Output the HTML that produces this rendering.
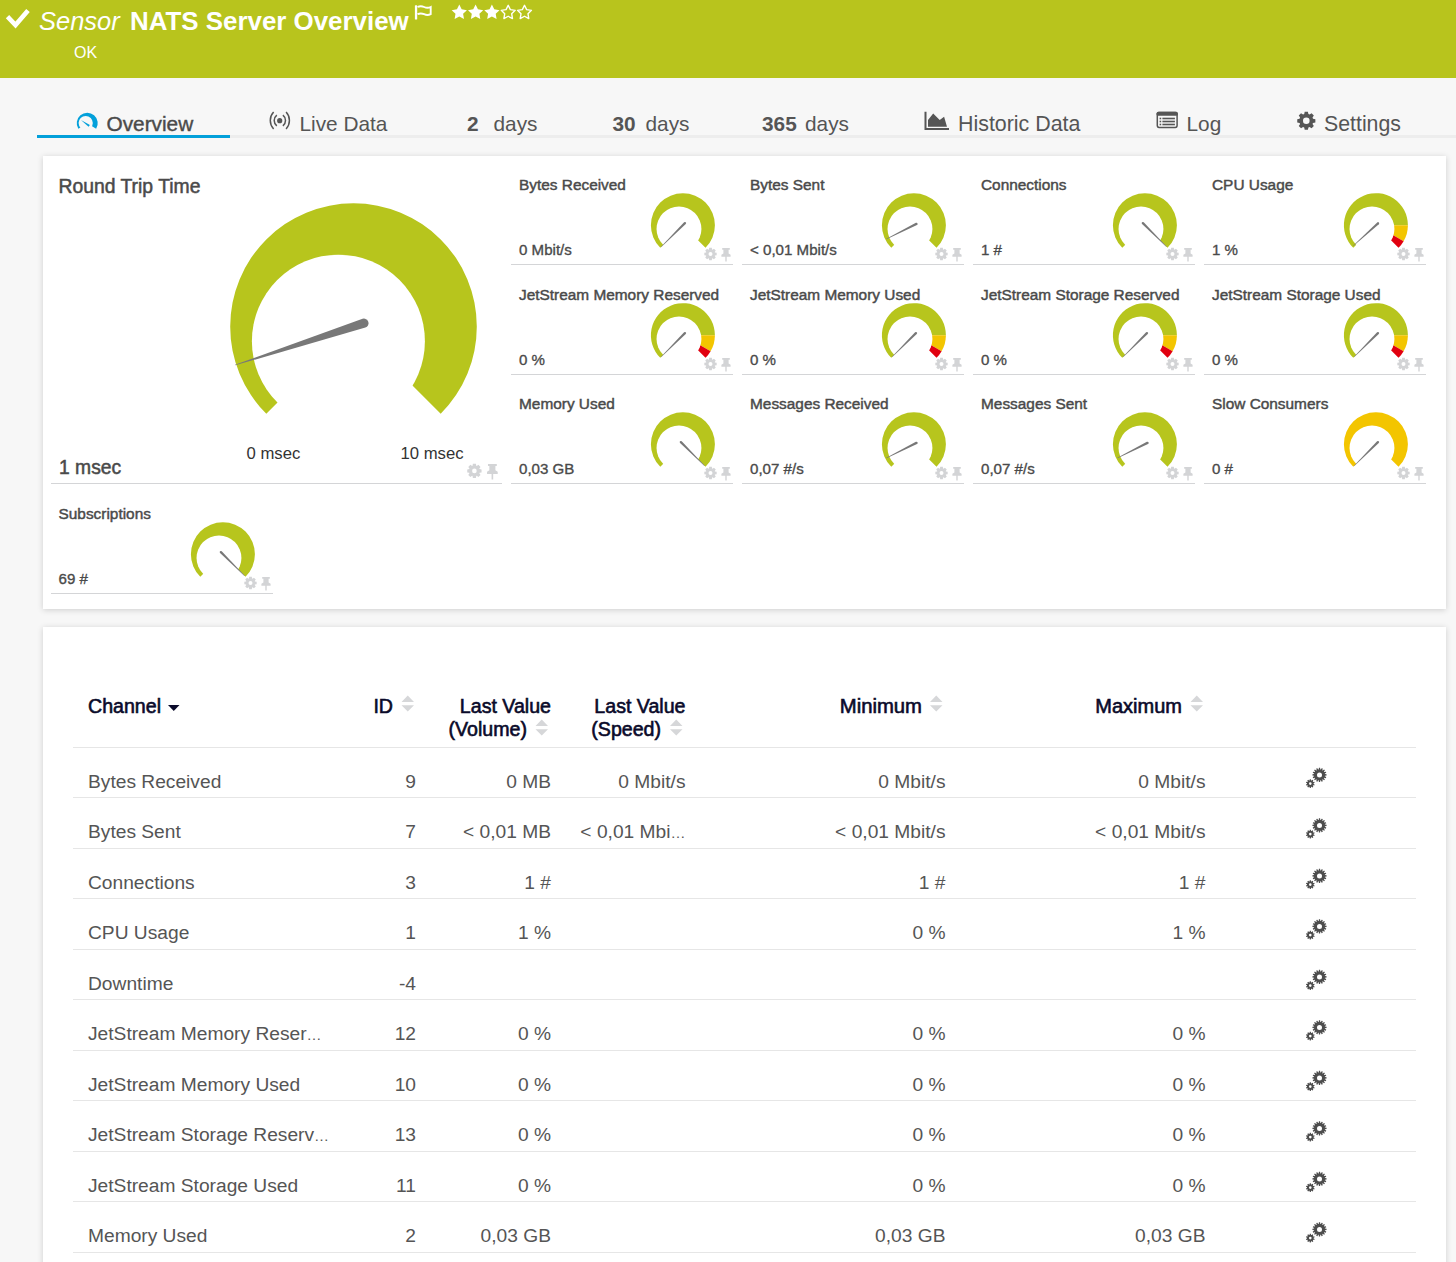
<!DOCTYPE html>
<html><head><meta charset="utf-8"><title>Sensor NATS Server Overview</title>
<style>
html,body{margin:0;padding:0;}
body{width:1456px;height:1262px;overflow:hidden;background:#f7f7f7;font-family:"Liberation Sans",sans-serif;position:relative;}
.t{position:absolute;white-space:nowrap;font-family:"Liberation Sans",sans-serif;}
.hdr{position:absolute;left:0;top:0;width:1456px;height:78px;background:#b8c41d;}
.card{position:absolute;left:43px;width:1403px;background:#fff;box-shadow:0 1px 6px rgba(0,0,0,0.17);}
svg{position:absolute;left:0;top:0;}
</style></head><body>
<div class="hdr"></div><div class="t" style="left:39.00px;top:8.91px;font-size:25.5px;line-height:25.5px;font-weight:400;color:#fff;font-style:italic;">Sensor</div>
<div class="t" style="left:130.00px;top:8.57px;font-size:25.9px;line-height:25.9px;font-weight:700;color:#fff;font-style:normal;">NATS Server Overview</div>
<div class="t" style="left:74.00px;top:45.45px;font-size:16px;line-height:16px;font-weight:400;color:#fff;font-style:normal;">OK</div>
<div style="position:absolute;left:230px;top:135px;width:1226px;height:3px;background:#ededed"></div><div style="position:absolute;left:37px;top:135px;width:193px;height:3px;background:#03a0da"></div><div class="t" style="left:106.50px;top:114.19px;font-size:20.8px;line-height:20.8px;font-weight:400;color:#4a4a4a;font-style:normal;-webkit-text-stroke:0.4px #4a4a4a">Overview</div>
<div class="t" style="left:299.50px;top:114.19px;font-size:20.8px;line-height:20.8px;font-weight:400;color:#555;font-style:normal;">Live Data</div>
<div class="t" style="left:467.00px;top:114.19px;font-size:20.8px;line-height:20.8px;font-weight:700;color:#555;font-style:normal;">2</div>
<div class="t" style="left:493.50px;top:114.19px;font-size:20.8px;line-height:20.8px;font-weight:400;color:#555;font-style:normal;">days</div>
<div class="t" style="left:612.50px;top:114.19px;font-size:20.8px;line-height:20.8px;font-weight:700;color:#555;font-style:normal;">30</div>
<div class="t" style="left:645.50px;top:114.19px;font-size:20.8px;line-height:20.8px;font-weight:400;color:#555;font-style:normal;">days</div>
<div class="t" style="left:762.00px;top:114.19px;font-size:20.8px;line-height:20.8px;font-weight:700;color:#555;font-style:normal;">365</div>
<div class="t" style="left:805.00px;top:114.19px;font-size:20.8px;line-height:20.8px;font-weight:400;color:#555;font-style:normal;">days</div>
<div class="t" style="left:958.00px;top:113.68px;font-size:21.4px;line-height:21.4px;font-weight:400;color:#555;font-style:normal;">Historic Data</div>
<div class="t" style="left:1186.50px;top:114.19px;font-size:20.8px;line-height:20.8px;font-weight:400;color:#555;font-style:normal;">Log</div>
<div class="t" style="left:1324.00px;top:113.77px;font-size:21.3px;line-height:21.3px;font-weight:400;color:#555;font-style:normal;">Settings</div>
<div class="card" style="top:156px;height:453px"></div><div class="card" style="top:627px;height:700px"></div><div class="t" style="left:58.50px;top:177.22px;font-size:19.35px;line-height:19.35px;font-weight:400;color:#4a4a4a;font-style:normal;-webkit-text-stroke:0.5px #4a4a4a">Round Trip Time</div>
<div class="t" style="left:59.00px;top:457.76px;font-size:19.3px;line-height:19.3px;font-weight:400;color:#4a4a4a;font-style:normal;-webkit-text-stroke:0.5px #4a4a4a">1 msec</div>
<div class="t" style="left:246.50px;top:445.56px;font-size:16.7px;line-height:16.7px;font-weight:400;color:#333;font-style:normal;">0 msec</div>
<div class="t" style="left:400.50px;top:445.56px;font-size:16.7px;line-height:16.7px;font-weight:400;color:#333;font-style:normal;">10 msec</div>
<div class="t" style="left:519.00px;top:177.06px;font-size:15.4px;line-height:15.4px;font-weight:400;color:#4a4a4a;font-style:normal;-webkit-text-stroke:0.45px #4a4a4a">Bytes Received</div>
<div class="t" style="left:519.00px;top:242.21px;font-size:15.1px;line-height:15.1px;font-weight:400;color:#4a4a4a;font-style:normal;-webkit-text-stroke:0.35px #4a4a4a">0 Mbit/s</div>
<div class="t" style="left:750.00px;top:177.06px;font-size:15.4px;line-height:15.4px;font-weight:400;color:#4a4a4a;font-style:normal;-webkit-text-stroke:0.45px #4a4a4a">Bytes Sent</div>
<div class="t" style="left:750.00px;top:242.21px;font-size:15.1px;line-height:15.1px;font-weight:400;color:#4a4a4a;font-style:normal;-webkit-text-stroke:0.35px #4a4a4a">&lt; 0,01 Mbit/s</div>
<div class="t" style="left:981.00px;top:177.06px;font-size:15.4px;line-height:15.4px;font-weight:400;color:#4a4a4a;font-style:normal;-webkit-text-stroke:0.45px #4a4a4a">Connections</div>
<div class="t" style="left:981.00px;top:242.21px;font-size:15.1px;line-height:15.1px;font-weight:400;color:#4a4a4a;font-style:normal;-webkit-text-stroke:0.35px #4a4a4a">1 #</div>
<div class="t" style="left:1212.00px;top:177.06px;font-size:15.4px;line-height:15.4px;font-weight:400;color:#4a4a4a;font-style:normal;-webkit-text-stroke:0.45px #4a4a4a">CPU Usage</div>
<div class="t" style="left:1212.00px;top:242.21px;font-size:15.1px;line-height:15.1px;font-weight:400;color:#4a4a4a;font-style:normal;-webkit-text-stroke:0.35px #4a4a4a">1 %</div>
<div class="t" style="left:519.00px;top:287.06px;font-size:15.4px;line-height:15.4px;font-weight:400;color:#4a4a4a;font-style:normal;-webkit-text-stroke:0.45px #4a4a4a">JetStream Memory Reserved</div>
<div class="t" style="left:519.00px;top:352.21px;font-size:15.1px;line-height:15.1px;font-weight:400;color:#4a4a4a;font-style:normal;-webkit-text-stroke:0.35px #4a4a4a">0 %</div>
<div class="t" style="left:750.00px;top:287.06px;font-size:15.4px;line-height:15.4px;font-weight:400;color:#4a4a4a;font-style:normal;-webkit-text-stroke:0.45px #4a4a4a">JetStream Memory Used</div>
<div class="t" style="left:750.00px;top:352.21px;font-size:15.1px;line-height:15.1px;font-weight:400;color:#4a4a4a;font-style:normal;-webkit-text-stroke:0.35px #4a4a4a">0 %</div>
<div class="t" style="left:981.00px;top:287.06px;font-size:15.4px;line-height:15.4px;font-weight:400;color:#4a4a4a;font-style:normal;-webkit-text-stroke:0.45px #4a4a4a">JetStream Storage Reserved</div>
<div class="t" style="left:981.00px;top:352.21px;font-size:15.1px;line-height:15.1px;font-weight:400;color:#4a4a4a;font-style:normal;-webkit-text-stroke:0.35px #4a4a4a">0 %</div>
<div class="t" style="left:1212.00px;top:287.06px;font-size:15.4px;line-height:15.4px;font-weight:400;color:#4a4a4a;font-style:normal;-webkit-text-stroke:0.45px #4a4a4a">JetStream Storage Used</div>
<div class="t" style="left:1212.00px;top:352.21px;font-size:15.1px;line-height:15.1px;font-weight:400;color:#4a4a4a;font-style:normal;-webkit-text-stroke:0.35px #4a4a4a">0 %</div>
<div class="t" style="left:519.00px;top:396.06px;font-size:15.4px;line-height:15.4px;font-weight:400;color:#4a4a4a;font-style:normal;-webkit-text-stroke:0.45px #4a4a4a">Memory Used</div>
<div class="t" style="left:519.00px;top:461.21px;font-size:15.1px;line-height:15.1px;font-weight:400;color:#4a4a4a;font-style:normal;-webkit-text-stroke:0.35px #4a4a4a">0,03 GB</div>
<div class="t" style="left:750.00px;top:396.06px;font-size:15.4px;line-height:15.4px;font-weight:400;color:#4a4a4a;font-style:normal;-webkit-text-stroke:0.45px #4a4a4a">Messages Received</div>
<div class="t" style="left:750.00px;top:461.21px;font-size:15.1px;line-height:15.1px;font-weight:400;color:#4a4a4a;font-style:normal;-webkit-text-stroke:0.35px #4a4a4a">0,07 #/s</div>
<div class="t" style="left:981.00px;top:396.06px;font-size:15.4px;line-height:15.4px;font-weight:400;color:#4a4a4a;font-style:normal;-webkit-text-stroke:0.45px #4a4a4a">Messages Sent</div>
<div class="t" style="left:981.00px;top:461.21px;font-size:15.1px;line-height:15.1px;font-weight:400;color:#4a4a4a;font-style:normal;-webkit-text-stroke:0.35px #4a4a4a">0,07 #/s</div>
<div class="t" style="left:1212.00px;top:396.06px;font-size:15.4px;line-height:15.4px;font-weight:400;color:#4a4a4a;font-style:normal;-webkit-text-stroke:0.45px #4a4a4a">Slow Consumers</div>
<div class="t" style="left:1212.00px;top:461.21px;font-size:15.1px;line-height:15.1px;font-weight:400;color:#4a4a4a;font-style:normal;-webkit-text-stroke:0.35px #4a4a4a">0 #</div>
<div class="t" style="left:58.50px;top:506.06px;font-size:15.4px;line-height:15.4px;font-weight:400;color:#4a4a4a;font-style:normal;-webkit-text-stroke:0.45px #4a4a4a">Subscriptions</div>
<div class="t" style="left:58.50px;top:571.21px;font-size:15.1px;line-height:15.1px;font-weight:400;color:#4a4a4a;font-style:normal;-webkit-text-stroke:0.35px #4a4a4a">69 #</div>
<div class="t" style="left:88.00px;top:697.20px;font-size:19.6px;line-height:19.6px;font-weight:400;color:#0a0a2a;font-style:normal;-webkit-text-stroke:0.6px #0a0a2a">Channel</div>
<div class="t" style="right:1063.00px;top:697.20px;font-size:19.6px;line-height:19.6px;font-weight:400;color:#0a0a2a;font-style:normal;-webkit-text-stroke:0.6px #0a0a2a">ID</div>
<div class="t" style="right:905.00px;top:696.70px;font-size:19.6px;line-height:19.6px;font-weight:400;color:#0a0a2a;font-style:normal;-webkit-text-stroke:0.6px #0a0a2a">Last Value</div>
<div class="t" style="right:929.00px;top:719.90px;font-size:19.6px;line-height:19.6px;font-weight:400;color:#0a0a2a;font-style:normal;-webkit-text-stroke:0.6px #0a0a2a">(Volume)</div>
<div class="t" style="right:770.50px;top:696.70px;font-size:19.6px;line-height:19.6px;font-weight:400;color:#0a0a2a;font-style:normal;-webkit-text-stroke:0.6px #0a0a2a">Last Value</div>
<div class="t" style="right:795.00px;top:719.90px;font-size:19.6px;line-height:19.6px;font-weight:400;color:#0a0a2a;font-style:normal;-webkit-text-stroke:0.6px #0a0a2a">(Speed)</div>
<div class="t" style="right:534.00px;top:696.01px;font-size:20.3px;line-height:20.3px;font-weight:400;color:#0a0a2a;font-style:normal;-webkit-text-stroke:0.6px #0a0a2a">Minimum</div>
<div class="t" style="right:274.00px;top:696.27px;font-size:20.0px;line-height:20.0px;font-weight:400;color:#0a0a2a;font-style:normal;-webkit-text-stroke:0.6px #0a0a2a">Maximum</div>
<div class="t" style="left:88.00px;top:771.94px;font-size:19.2px;line-height:19.2px;font-weight:400;color:#555;font-style:normal;">Bytes Received</div>
<div class="t" style="right:1040.00px;top:771.94px;font-size:19.2px;line-height:19.2px;font-weight:400;color:#555;font-style:normal;">9</div>
<div class="t" style="right:905.00px;top:771.94px;font-size:19.2px;line-height:19.2px;font-weight:400;color:#555;font-style:normal;">0 MB</div>
<div class="t" style="right:770.50px;top:771.94px;font-size:19.2px;line-height:19.2px;font-weight:400;color:#555;font-style:normal;">0 Mbit/s</div>
<div class="t" style="right:510.50px;top:771.94px;font-size:19.2px;line-height:19.2px;font-weight:400;color:#555;font-style:normal;">0 Mbit/s</div>
<div class="t" style="right:250.50px;top:771.94px;font-size:19.2px;line-height:19.2px;font-weight:400;color:#555;font-style:normal;">0 Mbit/s</div>
<div class="t" style="left:88.00px;top:822.44px;font-size:19.2px;line-height:19.2px;font-weight:400;color:#555;font-style:normal;">Bytes Sent</div>
<div class="t" style="right:1040.00px;top:822.44px;font-size:19.2px;line-height:19.2px;font-weight:400;color:#555;font-style:normal;">7</div>
<div class="t" style="right:905.00px;top:822.44px;font-size:19.2px;line-height:19.2px;font-weight:400;color:#555;font-style:normal;">&lt; 0,01 MB</div>
<div class="t" style="right:770.50px;top:822.44px;font-size:19.2px;line-height:19.2px;font-weight:400;color:#555;font-style:normal;">&lt; 0,01 Mbi<span style="font-size:15px">…</span></div>
<div class="t" style="right:510.50px;top:822.44px;font-size:19.2px;line-height:19.2px;font-weight:400;color:#555;font-style:normal;">&lt; 0,01 Mbit/s</div>
<div class="t" style="right:250.50px;top:822.44px;font-size:19.2px;line-height:19.2px;font-weight:400;color:#555;font-style:normal;">&lt; 0,01 Mbit/s</div>
<div class="t" style="left:88.00px;top:872.94px;font-size:19.2px;line-height:19.2px;font-weight:400;color:#555;font-style:normal;">Connections</div>
<div class="t" style="right:1040.00px;top:872.94px;font-size:19.2px;line-height:19.2px;font-weight:400;color:#555;font-style:normal;">3</div>
<div class="t" style="right:905.00px;top:872.94px;font-size:19.2px;line-height:19.2px;font-weight:400;color:#555;font-style:normal;">1 #</div>
<div class="t" style="right:510.50px;top:872.94px;font-size:19.2px;line-height:19.2px;font-weight:400;color:#555;font-style:normal;">1 #</div>
<div class="t" style="right:250.50px;top:872.94px;font-size:19.2px;line-height:19.2px;font-weight:400;color:#555;font-style:normal;">1 #</div>
<div class="t" style="left:88.00px;top:923.44px;font-size:19.2px;line-height:19.2px;font-weight:400;color:#555;font-style:normal;">CPU Usage</div>
<div class="t" style="right:1040.00px;top:923.44px;font-size:19.2px;line-height:19.2px;font-weight:400;color:#555;font-style:normal;">1</div>
<div class="t" style="right:905.00px;top:923.44px;font-size:19.2px;line-height:19.2px;font-weight:400;color:#555;font-style:normal;">1 %</div>
<div class="t" style="right:510.50px;top:923.44px;font-size:19.2px;line-height:19.2px;font-weight:400;color:#555;font-style:normal;">0 %</div>
<div class="t" style="right:250.50px;top:923.44px;font-size:19.2px;line-height:19.2px;font-weight:400;color:#555;font-style:normal;">1 %</div>
<div class="t" style="left:88.00px;top:973.94px;font-size:19.2px;line-height:19.2px;font-weight:400;color:#555;font-style:normal;">Downtime</div>
<div class="t" style="right:1040.00px;top:973.94px;font-size:19.2px;line-height:19.2px;font-weight:400;color:#555;font-style:normal;">-4</div>
<div class="t" style="left:88.00px;top:1024.44px;font-size:19.2px;line-height:19.2px;font-weight:400;color:#555;font-style:normal;">JetStream Memory Reser<span style="font-size:15px">…</span></div>
<div class="t" style="right:1040.00px;top:1024.44px;font-size:19.2px;line-height:19.2px;font-weight:400;color:#555;font-style:normal;">12</div>
<div class="t" style="right:905.00px;top:1024.44px;font-size:19.2px;line-height:19.2px;font-weight:400;color:#555;font-style:normal;">0 %</div>
<div class="t" style="right:510.50px;top:1024.44px;font-size:19.2px;line-height:19.2px;font-weight:400;color:#555;font-style:normal;">0 %</div>
<div class="t" style="right:250.50px;top:1024.44px;font-size:19.2px;line-height:19.2px;font-weight:400;color:#555;font-style:normal;">0 %</div>
<div class="t" style="left:88.00px;top:1074.94px;font-size:19.2px;line-height:19.2px;font-weight:400;color:#555;font-style:normal;">JetStream Memory Used</div>
<div class="t" style="right:1040.00px;top:1074.94px;font-size:19.2px;line-height:19.2px;font-weight:400;color:#555;font-style:normal;">10</div>
<div class="t" style="right:905.00px;top:1074.94px;font-size:19.2px;line-height:19.2px;font-weight:400;color:#555;font-style:normal;">0 %</div>
<div class="t" style="right:510.50px;top:1074.94px;font-size:19.2px;line-height:19.2px;font-weight:400;color:#555;font-style:normal;">0 %</div>
<div class="t" style="right:250.50px;top:1074.94px;font-size:19.2px;line-height:19.2px;font-weight:400;color:#555;font-style:normal;">0 %</div>
<div class="t" style="left:88.00px;top:1125.44px;font-size:19.2px;line-height:19.2px;font-weight:400;color:#555;font-style:normal;">JetStream Storage Reserv<span style="font-size:15px">…</span></div>
<div class="t" style="right:1040.00px;top:1125.44px;font-size:19.2px;line-height:19.2px;font-weight:400;color:#555;font-style:normal;">13</div>
<div class="t" style="right:905.00px;top:1125.44px;font-size:19.2px;line-height:19.2px;font-weight:400;color:#555;font-style:normal;">0 %</div>
<div class="t" style="right:510.50px;top:1125.44px;font-size:19.2px;line-height:19.2px;font-weight:400;color:#555;font-style:normal;">0 %</div>
<div class="t" style="right:250.50px;top:1125.44px;font-size:19.2px;line-height:19.2px;font-weight:400;color:#555;font-style:normal;">0 %</div>
<div class="t" style="left:88.00px;top:1175.94px;font-size:19.2px;line-height:19.2px;font-weight:400;color:#555;font-style:normal;">JetStream Storage Used</div>
<div class="t" style="right:1040.00px;top:1175.94px;font-size:19.2px;line-height:19.2px;font-weight:400;color:#555;font-style:normal;">11</div>
<div class="t" style="right:905.00px;top:1175.94px;font-size:19.2px;line-height:19.2px;font-weight:400;color:#555;font-style:normal;">0 %</div>
<div class="t" style="right:510.50px;top:1175.94px;font-size:19.2px;line-height:19.2px;font-weight:400;color:#555;font-style:normal;">0 %</div>
<div class="t" style="right:250.50px;top:1175.94px;font-size:19.2px;line-height:19.2px;font-weight:400;color:#555;font-style:normal;">0 %</div>
<div class="t" style="left:88.00px;top:1226.44px;font-size:19.2px;line-height:19.2px;font-weight:400;color:#555;font-style:normal;">Memory Used</div>
<div class="t" style="right:1040.00px;top:1226.44px;font-size:19.2px;line-height:19.2px;font-weight:400;color:#555;font-style:normal;">2</div>
<div class="t" style="right:905.00px;top:1226.44px;font-size:19.2px;line-height:19.2px;font-weight:400;color:#555;font-style:normal;">0,03 GB</div>
<div class="t" style="right:510.50px;top:1226.44px;font-size:19.2px;line-height:19.2px;font-weight:400;color:#555;font-style:normal;">0,03 GB</div>
<div class="t" style="right:250.50px;top:1226.44px;font-size:19.2px;line-height:19.2px;font-weight:400;color:#555;font-style:normal;">0,03 GB</div>
<svg width="1456" height="1262" viewBox="0 0 1456 1262"><polyline points="7.5,16.6 15.5,25.1 28,10.4" fill="none" stroke="#fff" stroke-width="4.6"/><rect x="414.9" y="5.2" width="2.3" height="14.4" rx="0.6" fill="#fff"/><path d="M417.5,7.0 q3.3,-1.5 6.6,0 t6.6,0 v7.2 q-3.3,1.5 -6.6,0 t-6.6,0" fill="none" stroke="#fff" stroke-width="1.9"/><path d="M459.30,4.60 L456.95,9.36 L451.69,10.13 L455.50,13.84 L454.60,19.07 L459.30,16.60 L464.00,19.07 L463.10,13.84 L466.91,10.13 L461.65,9.36 Z" fill="#fff"/><path d="M475.60,4.60 L473.25,9.36 L467.99,10.13 L471.80,13.84 L470.90,19.07 L475.60,16.60 L480.30,19.07 L479.40,13.84 L483.21,10.13 L477.95,9.36 Z" fill="#fff"/><path d="M491.90,4.60 L489.55,9.36 L484.29,10.13 L488.10,13.84 L487.20,19.07 L491.90,16.60 L496.60,19.07 L495.70,13.84 L499.51,10.13 L494.25,9.36 Z" fill="#fff"/><path d="M508.20,5.30 L506.05,9.65 L501.26,10.34 L504.73,13.73 L503.91,18.51 L508.20,16.25 L512.49,18.51 L511.67,13.73 L515.14,10.34 L510.35,9.65 Z" fill="none" stroke="#fff" stroke-width="1.4" stroke-linejoin="round"/><path d="M524.50,5.30 L522.35,9.65 L517.56,10.34 L521.03,13.73 L520.21,18.51 L524.50,16.25 L528.79,18.51 L527.97,13.73 L531.44,10.34 L526.65,9.65 Z" fill="none" stroke="#fff" stroke-width="1.4" stroke-linejoin="round"/><path d="M87.24,123.30 L78.34,128.86 A10.50,10.50 0 1 1 96.14,128.86 Z" fill="#03a0da"/><circle cx="85.7" cy="123.1" r="7.1" fill="#f7f7f7"/><path d="M80.9,120.1 L89.9,124.9 L88.6,126.8 Z" fill="#03a0da"/><circle cx="279.7" cy="120.7" r="2.6" fill="#555"/><path d="M273.6,112.1 A12.3,12.3 0 0 0 273.6,128.9 M276.8,115.2 A6.8,6.8 0 0 0 276.8,125.9 M286.1,112.1 A12.3,12.3 0 0 1 286.1,128.9 M282.9,115.2 A6.8,6.8 0 0 1 282.9,125.9" fill="none" stroke="#555" stroke-width="1.5"/><path d="M924.5,111.7 h2 v16.3 h22.5 v2 h-24.5 Z" fill="#555"/><path d="M928,126.8 V120 L933.2,113.5 L939.7,120.1 L944.1,116.7 L947,126.8 Z" fill="#555"/><rect x="1157.3" y="112.4" width="19.8" height="15" rx="1.8" fill="none" stroke="#555" stroke-width="1.5"/><rect x="1156.6" y="111.7" width="21.2" height="4" rx="1.5" fill="#555"/><rect x="1159.6" y="117.7" width="1.6" height="1.6" fill="#555"/><rect x="1162.4" y="117.7" width="12.5" height="1.6" fill="#555"/><rect x="1159.6" y="120.7" width="1.6" height="1.6" fill="#555"/><rect x="1162.4" y="120.7" width="12.5" height="1.6" fill="#555"/><rect x="1159.6" y="123.7" width="1.6" height="1.6" fill="#555"/><rect x="1162.4" y="123.7" width="12.5" height="1.6" fill="#555"/><path d="M1304.20,114.12 L1304.70,111.74 L1307.90,111.74 L1308.40,114.12 A7.00,7.00 0 0 1 1309.54,114.59 L1311.57,113.26 L1313.84,115.53 L1312.51,117.56 A7.00,7.00 0 0 1 1312.98,118.70 L1315.36,119.20 L1315.36,122.40 L1312.98,122.90 A7.00,7.00 0 0 1 1312.51,124.04 L1313.84,126.07 L1311.57,128.34 L1309.54,127.01 A7.00,7.00 0 0 1 1308.40,127.48 L1307.90,129.86 L1304.70,129.86 L1304.20,127.48 A7.00,7.00 0 0 1 1303.06,127.01 L1301.03,128.34 L1298.76,126.07 L1300.09,124.04 A7.00,7.00 0 0 1 1299.62,122.90 L1297.24,122.40 L1297.24,119.20 L1299.62,118.70 A7.00,7.00 0 0 1 1300.09,117.56 L1298.76,115.53 L1301.03,113.26 L1303.06,114.59 A7.00,7.00 0 0 1 1304.20,114.12 Z M1309.60,120.80 A3.30,3.30 0 1 0 1303.00,120.80 A3.30,3.30 0 1 0 1309.60,120.80 Z" fill="#555" fill-rule="evenodd"/><path d="M353.50,326.60 L266.31,413.79 A123.30,123.30 0 1 1 440.69,413.79 Z" fill="#b7c51d"/><circle cx="338.40" cy="341.20" r="86.50" fill="#fff"/><path d="M362.54,318.83 L235.00,364.79 L235.19,365.36 L365.38,327.58 A4.60,4.60 0 0 0 362.54,318.83 Z" fill="#787878"/><path d="M472.54,465.77 L472.89,463.75 L475.91,463.75 L476.26,465.77 A5.45,5.45 0 0 1 476.71,465.96 L478.39,464.78 L480.52,466.91 L479.34,468.59 A5.45,5.45 0 0 1 479.53,469.04 L481.55,469.39 L481.55,472.41 L479.53,472.76 A5.45,5.45 0 0 1 479.34,473.21 L480.52,474.89 L478.39,477.02 L476.71,475.84 A5.45,5.45 0 0 1 476.26,476.03 L475.91,478.05 L472.89,478.05 L472.54,476.03 A5.45,5.45 0 0 1 472.09,475.84 L470.41,477.02 L468.28,474.89 L469.46,473.21 A5.45,5.45 0 0 1 469.27,472.76 L467.25,472.41 L467.25,469.39 L469.27,469.04 A5.45,5.45 0 0 1 469.46,468.59 L468.28,466.91 L470.41,464.78 L472.09,465.96 A5.45,5.45 0 0 1 472.54,465.77 Z M476.72,470.90 A2.32,2.32 0 1 0 472.08,470.90 A2.32,2.32 0 1 0 476.72,470.90 Z" fill="#d3d4d6" fill-rule="evenodd"/><path d="M487.97,464.06 L496.79,464.06 L496.79,466.03 L495.40,466.03 L495.40,470.20 L497.72,471.83 L497.72,474.03 L493.19,474.03 L493.19,479.48 L491.57,479.48 L491.57,474.03 L487.04,474.03 L487.04,471.83 L489.36,470.20 L489.36,466.03 L487.97,466.03 Z" fill="#d3d4d6"/><rect x="51" y="483" width="451" height="1" fill="#d4d5d7"/><path d="M682.90,225.20 L660.27,247.83 A32.00,32.00 0 1 1 705.53,247.83 Z" fill="#b7c51d"/><circle cx="678.98" cy="228.99" r="22.45" fill="#fff"/><path d="M684.07,222.34 L661.00,246.75 L661.35,247.10 L685.76,224.03 A1.19,1.19 0 0 0 684.07,222.34 Z" fill="#787878"/><path d="M708.90,249.58 L709.20,247.84 L711.80,247.84 L712.10,249.58 A4.70,4.70 0 0 1 712.49,249.74 L713.94,248.72 L715.78,250.56 L714.76,252.01 A4.70,4.70 0 0 1 714.92,252.40 L716.66,252.70 L716.66,255.30 L714.92,255.60 A4.70,4.70 0 0 1 714.76,255.99 L715.78,257.44 L713.94,259.28 L712.49,258.26 A4.70,4.70 0 0 1 712.10,258.42 L711.80,260.16 L709.20,260.16 L708.90,258.42 A4.70,4.70 0 0 1 708.51,258.26 L707.06,259.28 L705.22,257.44 L706.24,255.99 A4.70,4.70 0 0 1 706.08,255.60 L704.34,255.30 L704.34,252.70 L706.08,252.40 A4.70,4.70 0 0 1 706.24,252.01 L705.22,250.56 L707.06,248.72 L708.51,249.74 A4.70,4.70 0 0 1 708.90,249.58 Z M712.50,254.00 A2.00,2.00 0 1 0 708.50,254.00 A2.00,2.00 0 1 0 712.50,254.00 Z" fill="#d3d4d6" fill-rule="evenodd"/><path d="M722.20,248.10 L729.80,248.10 L729.80,249.80 L728.60,249.80 L728.60,253.40 L730.60,254.80 L730.60,256.70 L726.70,256.70 L726.70,261.40 L725.30,261.40 L725.30,256.70 L721.40,256.70 L721.40,254.80 L723.40,253.40 L723.40,249.80 L722.20,249.80 Z" fill="#d3d4d6"/><rect x="511" y="264" width="222" height="1" fill="#d4d5d7"/><path d="M913.90,225.20 L891.27,247.83 A32.00,32.00 0 1 1 936.53,247.83 Z" fill="#b7c51d"/><circle cx="909.98" cy="228.99" r="22.45" fill="#fff"/><path d="M915.92,222.85 L886.33,238.75 L886.55,239.20 L916.99,224.99 A1.19,1.19 0 0 0 915.92,222.85 Z" fill="#787878"/><path d="M939.90,249.58 L940.20,247.84 L942.80,247.84 L943.10,249.58 A4.70,4.70 0 0 1 943.49,249.74 L944.94,248.72 L946.78,250.56 L945.76,252.01 A4.70,4.70 0 0 1 945.92,252.40 L947.66,252.70 L947.66,255.30 L945.92,255.60 A4.70,4.70 0 0 1 945.76,255.99 L946.78,257.44 L944.94,259.28 L943.49,258.26 A4.70,4.70 0 0 1 943.10,258.42 L942.80,260.16 L940.20,260.16 L939.90,258.42 A4.70,4.70 0 0 1 939.51,258.26 L938.06,259.28 L936.22,257.44 L937.24,255.99 A4.70,4.70 0 0 1 937.08,255.60 L935.34,255.30 L935.34,252.70 L937.08,252.40 A4.70,4.70 0 0 1 937.24,252.01 L936.22,250.56 L938.06,248.72 L939.51,249.74 A4.70,4.70 0 0 1 939.90,249.58 Z M943.50,254.00 A2.00,2.00 0 1 0 939.50,254.00 A2.00,2.00 0 1 0 943.50,254.00 Z" fill="#d3d4d6" fill-rule="evenodd"/><path d="M953.20,248.10 L960.80,248.10 L960.80,249.80 L959.60,249.80 L959.60,253.40 L961.60,254.80 L961.60,256.70 L957.70,256.70 L957.70,261.40 L956.30,261.40 L956.30,256.70 L952.40,256.70 L952.40,254.80 L954.40,253.40 L954.40,249.80 L953.20,249.80 Z" fill="#d3d4d6"/><rect x="742" y="264" width="222" height="1" fill="#d4d5d7"/><path d="M1144.90,225.20 L1122.27,247.83 A32.00,32.00 0 1 1 1167.53,247.83 Z" fill="#b7c51d"/><circle cx="1140.98" cy="228.99" r="22.45" fill="#fff"/><path d="M1142.04,224.03 L1166.45,247.10 L1166.80,246.75 L1143.73,222.34 A1.19,1.19 0 0 0 1142.04,224.03 Z" fill="#787878"/><path d="M1170.90,249.58 L1171.20,247.84 L1173.80,247.84 L1174.10,249.58 A4.70,4.70 0 0 1 1174.49,249.74 L1175.94,248.72 L1177.78,250.56 L1176.76,252.01 A4.70,4.70 0 0 1 1176.92,252.40 L1178.66,252.70 L1178.66,255.30 L1176.92,255.60 A4.70,4.70 0 0 1 1176.76,255.99 L1177.78,257.44 L1175.94,259.28 L1174.49,258.26 A4.70,4.70 0 0 1 1174.10,258.42 L1173.80,260.16 L1171.20,260.16 L1170.90,258.42 A4.70,4.70 0 0 1 1170.51,258.26 L1169.06,259.28 L1167.22,257.44 L1168.24,255.99 A4.70,4.70 0 0 1 1168.08,255.60 L1166.34,255.30 L1166.34,252.70 L1168.08,252.40 A4.70,4.70 0 0 1 1168.24,252.01 L1167.22,250.56 L1169.06,248.72 L1170.51,249.74 A4.70,4.70 0 0 1 1170.90,249.58 Z M1174.50,254.00 A2.00,2.00 0 1 0 1170.50,254.00 A2.00,2.00 0 1 0 1174.50,254.00 Z" fill="#d3d4d6" fill-rule="evenodd"/><path d="M1184.20,248.10 L1191.80,248.10 L1191.80,249.80 L1190.60,249.80 L1190.60,253.40 L1192.60,254.80 L1192.60,256.70 L1188.70,256.70 L1188.70,261.40 L1187.30,261.40 L1187.30,256.70 L1183.40,256.70 L1183.40,254.80 L1185.40,253.40 L1185.40,249.80 L1184.20,249.80 Z" fill="#d3d4d6"/><rect x="973" y="264" width="222" height="1" fill="#d4d5d7"/><path d="M1375.90,225.20 L1353.27,247.83 A32.00,32.00 0 1 1 1407.90,225.20 Z" fill="#b7c51d"/><path d="M1375.90,225.20 L1407.90,225.20 A32.00,32.00 0 0 1 1403.61,241.20 Z" fill="#f3c500"/><path d="M1375.90,225.20 L1403.61,241.20 A32.00,32.00 0 0 1 1398.53,247.83 Z" fill="#e1000f"/><circle cx="1371.98" cy="228.99" r="22.45" fill="#fff"/><path d="M1377.21,222.40 L1353.01,245.69 L1353.35,246.06 L1378.81,224.16 A1.19,1.19 0 0 0 1377.21,222.40 Z" fill="#787878"/><path d="M1401.90,249.58 L1402.20,247.84 L1404.80,247.84 L1405.10,249.58 A4.70,4.70 0 0 1 1405.49,249.74 L1406.94,248.72 L1408.78,250.56 L1407.76,252.01 A4.70,4.70 0 0 1 1407.92,252.40 L1409.66,252.70 L1409.66,255.30 L1407.92,255.60 A4.70,4.70 0 0 1 1407.76,255.99 L1408.78,257.44 L1406.94,259.28 L1405.49,258.26 A4.70,4.70 0 0 1 1405.10,258.42 L1404.80,260.16 L1402.20,260.16 L1401.90,258.42 A4.70,4.70 0 0 1 1401.51,258.26 L1400.06,259.28 L1398.22,257.44 L1399.24,255.99 A4.70,4.70 0 0 1 1399.08,255.60 L1397.34,255.30 L1397.34,252.70 L1399.08,252.40 A4.70,4.70 0 0 1 1399.24,252.01 L1398.22,250.56 L1400.06,248.72 L1401.51,249.74 A4.70,4.70 0 0 1 1401.90,249.58 Z M1405.50,254.00 A2.00,2.00 0 1 0 1401.50,254.00 A2.00,2.00 0 1 0 1405.50,254.00 Z" fill="#d3d4d6" fill-rule="evenodd"/><path d="M1415.20,248.10 L1422.80,248.10 L1422.80,249.80 L1421.60,249.80 L1421.60,253.40 L1423.60,254.80 L1423.60,256.70 L1419.70,256.70 L1419.70,261.40 L1418.30,261.40 L1418.30,256.70 L1414.40,256.70 L1414.40,254.80 L1416.40,253.40 L1416.40,249.80 L1415.20,249.80 Z" fill="#d3d4d6"/><rect x="1204" y="264" width="222" height="1" fill="#d4d5d7"/><path d="M682.90,335.20 L660.27,357.83 A32.00,32.00 0 1 1 714.90,335.20 Z" fill="#b7c51d"/><path d="M682.90,335.20 L714.90,335.20 A32.00,32.00 0 0 1 710.61,351.20 Z" fill="#f3c500"/><path d="M682.90,335.20 L710.61,351.20 A32.00,32.00 0 0 1 705.53,357.83 Z" fill="#e1000f"/><circle cx="678.98" cy="338.99" r="22.45" fill="#fff"/><path d="M684.07,332.34 L661.00,356.75 L661.35,357.10 L685.76,334.03 A1.19,1.19 0 0 0 684.07,332.34 Z" fill="#787878"/><path d="M708.90,359.58 L709.20,357.84 L711.80,357.84 L712.10,359.58 A4.70,4.70 0 0 1 712.49,359.74 L713.94,358.72 L715.78,360.56 L714.76,362.01 A4.70,4.70 0 0 1 714.92,362.40 L716.66,362.70 L716.66,365.30 L714.92,365.60 A4.70,4.70 0 0 1 714.76,365.99 L715.78,367.44 L713.94,369.28 L712.49,368.26 A4.70,4.70 0 0 1 712.10,368.42 L711.80,370.16 L709.20,370.16 L708.90,368.42 A4.70,4.70 0 0 1 708.51,368.26 L707.06,369.28 L705.22,367.44 L706.24,365.99 A4.70,4.70 0 0 1 706.08,365.60 L704.34,365.30 L704.34,362.70 L706.08,362.40 A4.70,4.70 0 0 1 706.24,362.01 L705.22,360.56 L707.06,358.72 L708.51,359.74 A4.70,4.70 0 0 1 708.90,359.58 Z M712.50,364.00 A2.00,2.00 0 1 0 708.50,364.00 A2.00,2.00 0 1 0 712.50,364.00 Z" fill="#d3d4d6" fill-rule="evenodd"/><path d="M722.20,358.10 L729.80,358.10 L729.80,359.80 L728.60,359.80 L728.60,363.40 L730.60,364.80 L730.60,366.70 L726.70,366.70 L726.70,371.40 L725.30,371.40 L725.30,366.70 L721.40,366.70 L721.40,364.80 L723.40,363.40 L723.40,359.80 L722.20,359.80 Z" fill="#d3d4d6"/><rect x="511" y="374" width="222" height="1" fill="#d4d5d7"/><path d="M913.90,335.20 L891.27,357.83 A32.00,32.00 0 1 1 945.90,335.20 Z" fill="#b7c51d"/><path d="M913.90,335.20 L945.90,335.20 A32.00,32.00 0 0 1 941.61,351.20 Z" fill="#f3c500"/><path d="M913.90,335.20 L941.61,351.20 A32.00,32.00 0 0 1 936.53,357.83 Z" fill="#e1000f"/><circle cx="909.98" cy="338.99" r="22.45" fill="#fff"/><path d="M915.07,332.34 L892.00,356.75 L892.35,357.10 L916.76,334.03 A1.19,1.19 0 0 0 915.07,332.34 Z" fill="#787878"/><path d="M939.90,359.58 L940.20,357.84 L942.80,357.84 L943.10,359.58 A4.70,4.70 0 0 1 943.49,359.74 L944.94,358.72 L946.78,360.56 L945.76,362.01 A4.70,4.70 0 0 1 945.92,362.40 L947.66,362.70 L947.66,365.30 L945.92,365.60 A4.70,4.70 0 0 1 945.76,365.99 L946.78,367.44 L944.94,369.28 L943.49,368.26 A4.70,4.70 0 0 1 943.10,368.42 L942.80,370.16 L940.20,370.16 L939.90,368.42 A4.70,4.70 0 0 1 939.51,368.26 L938.06,369.28 L936.22,367.44 L937.24,365.99 A4.70,4.70 0 0 1 937.08,365.60 L935.34,365.30 L935.34,362.70 L937.08,362.40 A4.70,4.70 0 0 1 937.24,362.01 L936.22,360.56 L938.06,358.72 L939.51,359.74 A4.70,4.70 0 0 1 939.90,359.58 Z M943.50,364.00 A2.00,2.00 0 1 0 939.50,364.00 A2.00,2.00 0 1 0 943.50,364.00 Z" fill="#d3d4d6" fill-rule="evenodd"/><path d="M953.20,358.10 L960.80,358.10 L960.80,359.80 L959.60,359.80 L959.60,363.40 L961.60,364.80 L961.60,366.70 L957.70,366.70 L957.70,371.40 L956.30,371.40 L956.30,366.70 L952.40,366.70 L952.40,364.80 L954.40,363.40 L954.40,359.80 L953.20,359.80 Z" fill="#d3d4d6"/><rect x="742" y="374" width="222" height="1" fill="#d4d5d7"/><path d="M1144.90,335.20 L1122.27,357.83 A32.00,32.00 0 1 1 1176.90,335.20 Z" fill="#b7c51d"/><path d="M1144.90,335.20 L1176.90,335.20 A32.00,32.00 0 0 1 1172.61,351.20 Z" fill="#f3c500"/><path d="M1144.90,335.20 L1172.61,351.20 A32.00,32.00 0 0 1 1167.53,357.83 Z" fill="#e1000f"/><circle cx="1140.98" cy="338.99" r="22.45" fill="#fff"/><path d="M1146.07,332.34 L1123.00,356.75 L1123.35,357.10 L1147.76,334.03 A1.19,1.19 0 0 0 1146.07,332.34 Z" fill="#787878"/><path d="M1170.90,359.58 L1171.20,357.84 L1173.80,357.84 L1174.10,359.58 A4.70,4.70 0 0 1 1174.49,359.74 L1175.94,358.72 L1177.78,360.56 L1176.76,362.01 A4.70,4.70 0 0 1 1176.92,362.40 L1178.66,362.70 L1178.66,365.30 L1176.92,365.60 A4.70,4.70 0 0 1 1176.76,365.99 L1177.78,367.44 L1175.94,369.28 L1174.49,368.26 A4.70,4.70 0 0 1 1174.10,368.42 L1173.80,370.16 L1171.20,370.16 L1170.90,368.42 A4.70,4.70 0 0 1 1170.51,368.26 L1169.06,369.28 L1167.22,367.44 L1168.24,365.99 A4.70,4.70 0 0 1 1168.08,365.60 L1166.34,365.30 L1166.34,362.70 L1168.08,362.40 A4.70,4.70 0 0 1 1168.24,362.01 L1167.22,360.56 L1169.06,358.72 L1170.51,359.74 A4.70,4.70 0 0 1 1170.90,359.58 Z M1174.50,364.00 A2.00,2.00 0 1 0 1170.50,364.00 A2.00,2.00 0 1 0 1174.50,364.00 Z" fill="#d3d4d6" fill-rule="evenodd"/><path d="M1184.20,358.10 L1191.80,358.10 L1191.80,359.80 L1190.60,359.80 L1190.60,363.40 L1192.60,364.80 L1192.60,366.70 L1188.70,366.70 L1188.70,371.40 L1187.30,371.40 L1187.30,366.70 L1183.40,366.70 L1183.40,364.80 L1185.40,363.40 L1185.40,359.80 L1184.20,359.80 Z" fill="#d3d4d6"/><rect x="973" y="374" width="222" height="1" fill="#d4d5d7"/><path d="M1375.90,335.20 L1353.27,357.83 A32.00,32.00 0 1 1 1407.90,335.20 Z" fill="#b7c51d"/><path d="M1375.90,335.20 L1407.90,335.20 A32.00,32.00 0 0 1 1403.61,351.20 Z" fill="#f3c500"/><path d="M1375.90,335.20 L1403.61,351.20 A32.00,32.00 0 0 1 1398.53,357.83 Z" fill="#e1000f"/><circle cx="1371.98" cy="338.99" r="22.45" fill="#fff"/><path d="M1377.07,332.34 L1354.00,356.75 L1354.35,357.10 L1378.76,334.03 A1.19,1.19 0 0 0 1377.07,332.34 Z" fill="#787878"/><path d="M1401.90,359.58 L1402.20,357.84 L1404.80,357.84 L1405.10,359.58 A4.70,4.70 0 0 1 1405.49,359.74 L1406.94,358.72 L1408.78,360.56 L1407.76,362.01 A4.70,4.70 0 0 1 1407.92,362.40 L1409.66,362.70 L1409.66,365.30 L1407.92,365.60 A4.70,4.70 0 0 1 1407.76,365.99 L1408.78,367.44 L1406.94,369.28 L1405.49,368.26 A4.70,4.70 0 0 1 1405.10,368.42 L1404.80,370.16 L1402.20,370.16 L1401.90,368.42 A4.70,4.70 0 0 1 1401.51,368.26 L1400.06,369.28 L1398.22,367.44 L1399.24,365.99 A4.70,4.70 0 0 1 1399.08,365.60 L1397.34,365.30 L1397.34,362.70 L1399.08,362.40 A4.70,4.70 0 0 1 1399.24,362.01 L1398.22,360.56 L1400.06,358.72 L1401.51,359.74 A4.70,4.70 0 0 1 1401.90,359.58 Z M1405.50,364.00 A2.00,2.00 0 1 0 1401.50,364.00 A2.00,2.00 0 1 0 1405.50,364.00 Z" fill="#d3d4d6" fill-rule="evenodd"/><path d="M1415.20,358.10 L1422.80,358.10 L1422.80,359.80 L1421.60,359.80 L1421.60,363.40 L1423.60,364.80 L1423.60,366.70 L1419.70,366.70 L1419.70,371.40 L1418.30,371.40 L1418.30,366.70 L1414.40,366.70 L1414.40,364.80 L1416.40,363.40 L1416.40,359.80 L1415.20,359.80 Z" fill="#d3d4d6"/><rect x="1204" y="374" width="222" height="1" fill="#d4d5d7"/><path d="M682.90,444.20 L660.27,466.83 A32.00,32.00 0 1 1 705.53,466.83 Z" fill="#b7c51d"/><circle cx="678.98" cy="447.99" r="22.45" fill="#fff"/><path d="M680.04,443.03 L704.45,466.10 L704.80,465.75 L681.73,441.34 A1.19,1.19 0 0 0 680.04,443.03 Z" fill="#787878"/><path d="M708.90,468.58 L709.20,466.84 L711.80,466.84 L712.10,468.58 A4.70,4.70 0 0 1 712.49,468.74 L713.94,467.72 L715.78,469.56 L714.76,471.01 A4.70,4.70 0 0 1 714.92,471.40 L716.66,471.70 L716.66,474.30 L714.92,474.60 A4.70,4.70 0 0 1 714.76,474.99 L715.78,476.44 L713.94,478.28 L712.49,477.26 A4.70,4.70 0 0 1 712.10,477.42 L711.80,479.16 L709.20,479.16 L708.90,477.42 A4.70,4.70 0 0 1 708.51,477.26 L707.06,478.28 L705.22,476.44 L706.24,474.99 A4.70,4.70 0 0 1 706.08,474.60 L704.34,474.30 L704.34,471.70 L706.08,471.40 A4.70,4.70 0 0 1 706.24,471.01 L705.22,469.56 L707.06,467.72 L708.51,468.74 A4.70,4.70 0 0 1 708.90,468.58 Z M712.50,473.00 A2.00,2.00 0 1 0 708.50,473.00 A2.00,2.00 0 1 0 712.50,473.00 Z" fill="#d3d4d6" fill-rule="evenodd"/><path d="M722.20,467.10 L729.80,467.10 L729.80,468.80 L728.60,468.80 L728.60,472.40 L730.60,473.80 L730.60,475.70 L726.70,475.70 L726.70,480.40 L725.30,480.40 L725.30,475.70 L721.40,475.70 L721.40,473.80 L723.40,472.40 L723.40,468.80 L722.20,468.80 Z" fill="#d3d4d6"/><rect x="511" y="483" width="222" height="1" fill="#d4d5d7"/><path d="M913.90,444.20 L891.27,466.83 A32.00,32.00 0 1 1 936.53,466.83 Z" fill="#b7c51d"/><circle cx="909.98" cy="447.99" r="22.45" fill="#fff"/><path d="M915.92,441.85 L886.33,457.75 L886.55,458.20 L916.99,443.99 A1.19,1.19 0 0 0 915.92,441.85 Z" fill="#787878"/><path d="M939.90,468.58 L940.20,466.84 L942.80,466.84 L943.10,468.58 A4.70,4.70 0 0 1 943.49,468.74 L944.94,467.72 L946.78,469.56 L945.76,471.01 A4.70,4.70 0 0 1 945.92,471.40 L947.66,471.70 L947.66,474.30 L945.92,474.60 A4.70,4.70 0 0 1 945.76,474.99 L946.78,476.44 L944.94,478.28 L943.49,477.26 A4.70,4.70 0 0 1 943.10,477.42 L942.80,479.16 L940.20,479.16 L939.90,477.42 A4.70,4.70 0 0 1 939.51,477.26 L938.06,478.28 L936.22,476.44 L937.24,474.99 A4.70,4.70 0 0 1 937.08,474.60 L935.34,474.30 L935.34,471.70 L937.08,471.40 A4.70,4.70 0 0 1 937.24,471.01 L936.22,469.56 L938.06,467.72 L939.51,468.74 A4.70,4.70 0 0 1 939.90,468.58 Z M943.50,473.00 A2.00,2.00 0 1 0 939.50,473.00 A2.00,2.00 0 1 0 943.50,473.00 Z" fill="#d3d4d6" fill-rule="evenodd"/><path d="M953.20,467.10 L960.80,467.10 L960.80,468.80 L959.60,468.80 L959.60,472.40 L961.60,473.80 L961.60,475.70 L957.70,475.70 L957.70,480.40 L956.30,480.40 L956.30,475.70 L952.40,475.70 L952.40,473.80 L954.40,472.40 L954.40,468.80 L953.20,468.80 Z" fill="#d3d4d6"/><rect x="742" y="483" width="222" height="1" fill="#d4d5d7"/><path d="M1144.90,444.20 L1122.27,466.83 A32.00,32.00 0 1 1 1167.53,466.83 Z" fill="#b7c51d"/><circle cx="1140.98" cy="447.99" r="22.45" fill="#fff"/><path d="M1146.92,441.85 L1117.33,457.75 L1117.55,458.20 L1147.99,443.99 A1.19,1.19 0 0 0 1146.92,441.85 Z" fill="#787878"/><path d="M1170.90,468.58 L1171.20,466.84 L1173.80,466.84 L1174.10,468.58 A4.70,4.70 0 0 1 1174.49,468.74 L1175.94,467.72 L1177.78,469.56 L1176.76,471.01 A4.70,4.70 0 0 1 1176.92,471.40 L1178.66,471.70 L1178.66,474.30 L1176.92,474.60 A4.70,4.70 0 0 1 1176.76,474.99 L1177.78,476.44 L1175.94,478.28 L1174.49,477.26 A4.70,4.70 0 0 1 1174.10,477.42 L1173.80,479.16 L1171.20,479.16 L1170.90,477.42 A4.70,4.70 0 0 1 1170.51,477.26 L1169.06,478.28 L1167.22,476.44 L1168.24,474.99 A4.70,4.70 0 0 1 1168.08,474.60 L1166.34,474.30 L1166.34,471.70 L1168.08,471.40 A4.70,4.70 0 0 1 1168.24,471.01 L1167.22,469.56 L1169.06,467.72 L1170.51,468.74 A4.70,4.70 0 0 1 1170.90,468.58 Z M1174.50,473.00 A2.00,2.00 0 1 0 1170.50,473.00 A2.00,2.00 0 1 0 1174.50,473.00 Z" fill="#d3d4d6" fill-rule="evenodd"/><path d="M1184.20,467.10 L1191.80,467.10 L1191.80,468.80 L1190.60,468.80 L1190.60,472.40 L1192.60,473.80 L1192.60,475.70 L1188.70,475.70 L1188.70,480.40 L1187.30,480.40 L1187.30,475.70 L1183.40,475.70 L1183.40,473.80 L1185.40,472.40 L1185.40,468.80 L1184.20,468.80 Z" fill="#d3d4d6"/><rect x="973" y="483" width="222" height="1" fill="#d4d5d7"/><path d="M1375.90,444.20 L1353.27,466.83 A32.00,32.00 0 1 1 1398.53,466.83 Z" fill="#f3c500"/><circle cx="1371.98" cy="447.99" r="22.45" fill="#fff"/><path d="M1377.07,441.34 L1354.00,465.75 L1354.35,466.10 L1378.76,443.03 A1.19,1.19 0 0 0 1377.07,441.34 Z" fill="#787878"/><path d="M1401.90,468.58 L1402.20,466.84 L1404.80,466.84 L1405.10,468.58 A4.70,4.70 0 0 1 1405.49,468.74 L1406.94,467.72 L1408.78,469.56 L1407.76,471.01 A4.70,4.70 0 0 1 1407.92,471.40 L1409.66,471.70 L1409.66,474.30 L1407.92,474.60 A4.70,4.70 0 0 1 1407.76,474.99 L1408.78,476.44 L1406.94,478.28 L1405.49,477.26 A4.70,4.70 0 0 1 1405.10,477.42 L1404.80,479.16 L1402.20,479.16 L1401.90,477.42 A4.70,4.70 0 0 1 1401.51,477.26 L1400.06,478.28 L1398.22,476.44 L1399.24,474.99 A4.70,4.70 0 0 1 1399.08,474.60 L1397.34,474.30 L1397.34,471.70 L1399.08,471.40 A4.70,4.70 0 0 1 1399.24,471.01 L1398.22,469.56 L1400.06,467.72 L1401.51,468.74 A4.70,4.70 0 0 1 1401.90,468.58 Z M1405.50,473.00 A2.00,2.00 0 1 0 1401.50,473.00 A2.00,2.00 0 1 0 1405.50,473.00 Z" fill="#d3d4d6" fill-rule="evenodd"/><path d="M1415.20,467.10 L1422.80,467.10 L1422.80,468.80 L1421.60,468.80 L1421.60,472.40 L1423.60,473.80 L1423.60,475.70 L1419.70,475.70 L1419.70,480.40 L1418.30,480.40 L1418.30,475.70 L1414.40,475.70 L1414.40,473.80 L1416.40,472.40 L1416.40,468.80 L1415.20,468.80 Z" fill="#d3d4d6"/><rect x="1204" y="483" width="222" height="1" fill="#d4d5d7"/><path d="M222.90,554.20 L200.27,576.83 A32.00,32.00 0 1 1 245.53,576.83 Z" fill="#b7c51d"/><circle cx="218.98" cy="557.99" r="22.45" fill="#fff"/><path d="M220.04,553.03 L244.45,576.10 L244.80,575.75 L221.73,551.34 A1.19,1.19 0 0 0 220.04,553.03 Z" fill="#787878"/><path d="M248.90,578.58 L249.20,576.84 L251.80,576.84 L252.10,578.58 A4.70,4.70 0 0 1 252.49,578.74 L253.94,577.72 L255.78,579.56 L254.76,581.01 A4.70,4.70 0 0 1 254.92,581.40 L256.66,581.70 L256.66,584.30 L254.92,584.60 A4.70,4.70 0 0 1 254.76,584.99 L255.78,586.44 L253.94,588.28 L252.49,587.26 A4.70,4.70 0 0 1 252.10,587.42 L251.80,589.16 L249.20,589.16 L248.90,587.42 A4.70,4.70 0 0 1 248.51,587.26 L247.06,588.28 L245.22,586.44 L246.24,584.99 A4.70,4.70 0 0 1 246.08,584.60 L244.34,584.30 L244.34,581.70 L246.08,581.40 A4.70,4.70 0 0 1 246.24,581.01 L245.22,579.56 L247.06,577.72 L248.51,578.74 A4.70,4.70 0 0 1 248.90,578.58 Z M252.50,583.00 A2.00,2.00 0 1 0 248.50,583.00 A2.00,2.00 0 1 0 252.50,583.00 Z" fill="#d3d4d6" fill-rule="evenodd"/><path d="M262.20,577.10 L269.80,577.10 L269.80,578.80 L268.60,578.80 L268.60,582.40 L270.60,583.80 L270.60,585.70 L266.70,585.70 L266.70,590.40 L265.30,590.40 L265.30,585.70 L261.40,585.70 L261.40,583.80 L263.40,582.40 L263.40,578.80 L262.20,578.80 Z" fill="#d3d4d6"/><rect x="51" y="593" width="222" height="1" fill="#d4d5d7"/><path d="M168,705 h11.5 l-5.75,6 Z" fill="#0a0a2a"/><path d="M401.50,702.00 L407.75,695.50 L414.00,702.00 Z M401.50,705.30 L414.00,705.30 L407.75,711.60 Z" fill="#d6d7d9"/><path d="M535.50,726.00 L541.75,719.50 L548.00,726.00 Z M535.50,729.30 L548.00,729.30 L541.75,735.60 Z" fill="#d6d7d9"/><path d="M670.00,726.00 L676.25,719.50 L682.50,726.00 Z M670.00,729.30 L682.50,729.30 L676.25,735.60 Z" fill="#d6d7d9"/><path d="M930.00,702.00 L936.25,695.50 L942.50,702.00 Z M930.00,705.30 L942.50,705.30 L936.25,711.60 Z" fill="#d6d7d9"/><path d="M1190.50,702.00 L1196.75,695.50 L1203.00,702.00 Z M1190.50,705.30 L1203.00,705.30 L1196.75,711.60 Z" fill="#d6d7d9"/><rect x="73" y="747" width="1343" height="1" fill="#e6e6e6"/><path d="M1318.70,769.46 L1318.90,767.83 L1320.10,767.83 L1320.30,769.46 A5.50,5.50 0 0 1 1320.84,769.57 L1321.65,768.13 L1322.76,768.59 L1322.32,770.18 A5.50,5.50 0 0 1 1322.78,770.49 L1324.08,769.47 L1324.93,770.32 L1323.91,771.62 A5.50,5.50 0 0 1 1324.22,772.08 L1325.81,771.64 L1326.27,772.75 L1324.83,773.56 A5.50,5.50 0 0 1 1324.94,774.10 L1326.57,774.30 L1326.57,775.50 L1324.94,775.70 A5.50,5.50 0 0 1 1324.83,776.24 L1326.27,777.05 L1325.81,778.16 L1324.22,777.72 A5.50,5.50 0 0 1 1323.91,778.18 L1324.93,779.48 L1324.08,780.33 L1322.78,779.31 A5.50,5.50 0 0 1 1322.32,779.62 L1322.76,781.21 L1321.65,781.67 L1320.84,780.23 A5.50,5.50 0 0 1 1320.30,780.34 L1320.10,781.97 L1318.90,781.97 L1318.70,780.34 A5.50,5.50 0 0 1 1318.16,780.23 L1317.35,781.67 L1316.24,781.21 L1316.68,779.62 A5.50,5.50 0 0 1 1316.22,779.31 L1314.92,780.33 L1314.07,779.48 L1315.09,778.18 A5.50,5.50 0 0 1 1314.78,777.72 L1313.19,778.16 L1312.73,777.05 L1314.17,776.24 A5.50,5.50 0 0 1 1314.06,775.70 L1312.43,775.50 L1312.43,774.30 L1314.06,774.10 A5.50,5.50 0 0 1 1314.17,773.56 L1312.73,772.75 L1313.19,771.64 L1314.78,772.08 A5.50,5.50 0 0 1 1315.09,771.62 L1314.07,770.32 L1314.92,769.47 L1316.22,770.49 A5.50,5.50 0 0 1 1316.68,770.18 L1316.24,768.59 L1317.35,768.13 L1318.16,769.57 A5.50,5.50 0 0 1 1318.70,769.46 Z M1322.00,774.90 A2.50,2.50 0 1 0 1317.00,774.90 A2.50,2.50 0 1 0 1322.00,774.90 Z" fill="#4d4d4d" fill-rule="evenodd"/><path d="M1309.55,780.39 L1309.75,779.23 L1310.85,779.23 L1311.05,780.39 A3.30,3.30 0 0 1 1311.58,780.56 L1312.42,779.74 L1313.31,780.39 L1312.80,781.44 A3.30,3.30 0 0 1 1313.12,781.89 L1314.28,781.73 L1314.62,782.77 L1313.59,783.32 A3.30,3.30 0 0 1 1313.59,783.88 L1314.62,784.43 L1314.28,785.47 L1313.12,785.31 A3.30,3.30 0 0 1 1312.80,785.76 L1313.31,786.81 L1312.42,787.46 L1311.58,786.64 A3.30,3.30 0 0 1 1311.05,786.81 L1310.85,787.97 L1309.75,787.97 L1309.55,786.81 A3.30,3.30 0 0 1 1309.02,786.64 L1308.18,787.46 L1307.29,786.81 L1307.80,785.76 A3.30,3.30 0 0 1 1307.48,785.31 L1306.32,785.47 L1305.98,784.43 L1307.01,783.88 A3.30,3.30 0 0 1 1307.01,783.32 L1305.98,782.77 L1306.32,781.73 L1307.48,781.89 A3.30,3.30 0 0 1 1307.80,781.44 L1307.29,780.39 L1308.18,779.74 L1309.02,780.56 A3.30,3.30 0 0 1 1309.55,780.39 Z M1311.60,783.60 A1.30,1.30 0 1 0 1309.00,783.60 A1.30,1.30 0 1 0 1311.60,783.60 Z" fill="#4d4d4d" fill-rule="evenodd"/><rect x="73" y="797" width="1343" height="1" fill="#e6e6e6"/><path d="M1318.70,819.96 L1318.90,818.33 L1320.10,818.33 L1320.30,819.96 A5.50,5.50 0 0 1 1320.84,820.07 L1321.65,818.63 L1322.76,819.09 L1322.32,820.68 A5.50,5.50 0 0 1 1322.78,820.99 L1324.08,819.97 L1324.93,820.82 L1323.91,822.12 A5.50,5.50 0 0 1 1324.22,822.58 L1325.81,822.14 L1326.27,823.25 L1324.83,824.06 A5.50,5.50 0 0 1 1324.94,824.60 L1326.57,824.80 L1326.57,826.00 L1324.94,826.20 A5.50,5.50 0 0 1 1324.83,826.74 L1326.27,827.55 L1325.81,828.66 L1324.22,828.22 A5.50,5.50 0 0 1 1323.91,828.68 L1324.93,829.98 L1324.08,830.83 L1322.78,829.81 A5.50,5.50 0 0 1 1322.32,830.12 L1322.76,831.71 L1321.65,832.17 L1320.84,830.73 A5.50,5.50 0 0 1 1320.30,830.84 L1320.10,832.47 L1318.90,832.47 L1318.70,830.84 A5.50,5.50 0 0 1 1318.16,830.73 L1317.35,832.17 L1316.24,831.71 L1316.68,830.12 A5.50,5.50 0 0 1 1316.22,829.81 L1314.92,830.83 L1314.07,829.98 L1315.09,828.68 A5.50,5.50 0 0 1 1314.78,828.22 L1313.19,828.66 L1312.73,827.55 L1314.17,826.74 A5.50,5.50 0 0 1 1314.06,826.20 L1312.43,826.00 L1312.43,824.80 L1314.06,824.60 A5.50,5.50 0 0 1 1314.17,824.06 L1312.73,823.25 L1313.19,822.14 L1314.78,822.58 A5.50,5.50 0 0 1 1315.09,822.12 L1314.07,820.82 L1314.92,819.97 L1316.22,820.99 A5.50,5.50 0 0 1 1316.68,820.68 L1316.24,819.09 L1317.35,818.63 L1318.16,820.07 A5.50,5.50 0 0 1 1318.70,819.96 Z M1322.00,825.40 A2.50,2.50 0 1 0 1317.00,825.40 A2.50,2.50 0 1 0 1322.00,825.40 Z" fill="#4d4d4d" fill-rule="evenodd"/><path d="M1309.55,830.89 L1309.75,829.73 L1310.85,829.73 L1311.05,830.89 A3.30,3.30 0 0 1 1311.58,831.06 L1312.42,830.24 L1313.31,830.89 L1312.80,831.94 A3.30,3.30 0 0 1 1313.12,832.39 L1314.28,832.23 L1314.62,833.27 L1313.59,833.82 A3.30,3.30 0 0 1 1313.59,834.38 L1314.62,834.93 L1314.28,835.97 L1313.12,835.81 A3.30,3.30 0 0 1 1312.80,836.26 L1313.31,837.31 L1312.42,837.96 L1311.58,837.14 A3.30,3.30 0 0 1 1311.05,837.31 L1310.85,838.47 L1309.75,838.47 L1309.55,837.31 A3.30,3.30 0 0 1 1309.02,837.14 L1308.18,837.96 L1307.29,837.31 L1307.80,836.26 A3.30,3.30 0 0 1 1307.48,835.81 L1306.32,835.97 L1305.98,834.93 L1307.01,834.38 A3.30,3.30 0 0 1 1307.01,833.82 L1305.98,833.27 L1306.32,832.23 L1307.48,832.39 A3.30,3.30 0 0 1 1307.80,831.94 L1307.29,830.89 L1308.18,830.24 L1309.02,831.06 A3.30,3.30 0 0 1 1309.55,830.89 Z M1311.60,834.10 A1.30,1.30 0 1 0 1309.00,834.10 A1.30,1.30 0 1 0 1311.60,834.10 Z" fill="#4d4d4d" fill-rule="evenodd"/><rect x="73" y="848" width="1343" height="1" fill="#e6e6e6"/><path d="M1318.70,870.46 L1318.90,868.83 L1320.10,868.83 L1320.30,870.46 A5.50,5.50 0 0 1 1320.84,870.57 L1321.65,869.13 L1322.76,869.59 L1322.32,871.18 A5.50,5.50 0 0 1 1322.78,871.49 L1324.08,870.47 L1324.93,871.32 L1323.91,872.62 A5.50,5.50 0 0 1 1324.22,873.08 L1325.81,872.64 L1326.27,873.75 L1324.83,874.56 A5.50,5.50 0 0 1 1324.94,875.10 L1326.57,875.30 L1326.57,876.50 L1324.94,876.70 A5.50,5.50 0 0 1 1324.83,877.24 L1326.27,878.05 L1325.81,879.16 L1324.22,878.72 A5.50,5.50 0 0 1 1323.91,879.18 L1324.93,880.48 L1324.08,881.33 L1322.78,880.31 A5.50,5.50 0 0 1 1322.32,880.62 L1322.76,882.21 L1321.65,882.67 L1320.84,881.23 A5.50,5.50 0 0 1 1320.30,881.34 L1320.10,882.97 L1318.90,882.97 L1318.70,881.34 A5.50,5.50 0 0 1 1318.16,881.23 L1317.35,882.67 L1316.24,882.21 L1316.68,880.62 A5.50,5.50 0 0 1 1316.22,880.31 L1314.92,881.33 L1314.07,880.48 L1315.09,879.18 A5.50,5.50 0 0 1 1314.78,878.72 L1313.19,879.16 L1312.73,878.05 L1314.17,877.24 A5.50,5.50 0 0 1 1314.06,876.70 L1312.43,876.50 L1312.43,875.30 L1314.06,875.10 A5.50,5.50 0 0 1 1314.17,874.56 L1312.73,873.75 L1313.19,872.64 L1314.78,873.08 A5.50,5.50 0 0 1 1315.09,872.62 L1314.07,871.32 L1314.92,870.47 L1316.22,871.49 A5.50,5.50 0 0 1 1316.68,871.18 L1316.24,869.59 L1317.35,869.13 L1318.16,870.57 A5.50,5.50 0 0 1 1318.70,870.46 Z M1322.00,875.90 A2.50,2.50 0 1 0 1317.00,875.90 A2.50,2.50 0 1 0 1322.00,875.90 Z" fill="#4d4d4d" fill-rule="evenodd"/><path d="M1309.55,881.39 L1309.75,880.23 L1310.85,880.23 L1311.05,881.39 A3.30,3.30 0 0 1 1311.58,881.56 L1312.42,880.74 L1313.31,881.39 L1312.80,882.44 A3.30,3.30 0 0 1 1313.12,882.89 L1314.28,882.73 L1314.62,883.77 L1313.59,884.32 A3.30,3.30 0 0 1 1313.59,884.88 L1314.62,885.43 L1314.28,886.47 L1313.12,886.31 A3.30,3.30 0 0 1 1312.80,886.76 L1313.31,887.81 L1312.42,888.46 L1311.58,887.64 A3.30,3.30 0 0 1 1311.05,887.81 L1310.85,888.97 L1309.75,888.97 L1309.55,887.81 A3.30,3.30 0 0 1 1309.02,887.64 L1308.18,888.46 L1307.29,887.81 L1307.80,886.76 A3.30,3.30 0 0 1 1307.48,886.31 L1306.32,886.47 L1305.98,885.43 L1307.01,884.88 A3.30,3.30 0 0 1 1307.01,884.32 L1305.98,883.77 L1306.32,882.73 L1307.48,882.89 A3.30,3.30 0 0 1 1307.80,882.44 L1307.29,881.39 L1308.18,880.74 L1309.02,881.56 A3.30,3.30 0 0 1 1309.55,881.39 Z M1311.60,884.60 A1.30,1.30 0 1 0 1309.00,884.60 A1.30,1.30 0 1 0 1311.60,884.60 Z" fill="#4d4d4d" fill-rule="evenodd"/><rect x="73" y="898" width="1343" height="1" fill="#e6e6e6"/><path d="M1318.70,920.96 L1318.90,919.33 L1320.10,919.33 L1320.30,920.96 A5.50,5.50 0 0 1 1320.84,921.07 L1321.65,919.63 L1322.76,920.09 L1322.32,921.68 A5.50,5.50 0 0 1 1322.78,921.99 L1324.08,920.97 L1324.93,921.82 L1323.91,923.12 A5.50,5.50 0 0 1 1324.22,923.58 L1325.81,923.14 L1326.27,924.25 L1324.83,925.06 A5.50,5.50 0 0 1 1324.94,925.60 L1326.57,925.80 L1326.57,927.00 L1324.94,927.20 A5.50,5.50 0 0 1 1324.83,927.74 L1326.27,928.55 L1325.81,929.66 L1324.22,929.22 A5.50,5.50 0 0 1 1323.91,929.68 L1324.93,930.98 L1324.08,931.83 L1322.78,930.81 A5.50,5.50 0 0 1 1322.32,931.12 L1322.76,932.71 L1321.65,933.17 L1320.84,931.73 A5.50,5.50 0 0 1 1320.30,931.84 L1320.10,933.47 L1318.90,933.47 L1318.70,931.84 A5.50,5.50 0 0 1 1318.16,931.73 L1317.35,933.17 L1316.24,932.71 L1316.68,931.12 A5.50,5.50 0 0 1 1316.22,930.81 L1314.92,931.83 L1314.07,930.98 L1315.09,929.68 A5.50,5.50 0 0 1 1314.78,929.22 L1313.19,929.66 L1312.73,928.55 L1314.17,927.74 A5.50,5.50 0 0 1 1314.06,927.20 L1312.43,927.00 L1312.43,925.80 L1314.06,925.60 A5.50,5.50 0 0 1 1314.17,925.06 L1312.73,924.25 L1313.19,923.14 L1314.78,923.58 A5.50,5.50 0 0 1 1315.09,923.12 L1314.07,921.82 L1314.92,920.97 L1316.22,921.99 A5.50,5.50 0 0 1 1316.68,921.68 L1316.24,920.09 L1317.35,919.63 L1318.16,921.07 A5.50,5.50 0 0 1 1318.70,920.96 Z M1322.00,926.40 A2.50,2.50 0 1 0 1317.00,926.40 A2.50,2.50 0 1 0 1322.00,926.40 Z" fill="#4d4d4d" fill-rule="evenodd"/><path d="M1309.55,931.89 L1309.75,930.73 L1310.85,930.73 L1311.05,931.89 A3.30,3.30 0 0 1 1311.58,932.06 L1312.42,931.24 L1313.31,931.89 L1312.80,932.94 A3.30,3.30 0 0 1 1313.12,933.39 L1314.28,933.23 L1314.62,934.27 L1313.59,934.82 A3.30,3.30 0 0 1 1313.59,935.38 L1314.62,935.93 L1314.28,936.97 L1313.12,936.81 A3.30,3.30 0 0 1 1312.80,937.26 L1313.31,938.31 L1312.42,938.96 L1311.58,938.14 A3.30,3.30 0 0 1 1311.05,938.31 L1310.85,939.47 L1309.75,939.47 L1309.55,938.31 A3.30,3.30 0 0 1 1309.02,938.14 L1308.18,938.96 L1307.29,938.31 L1307.80,937.26 A3.30,3.30 0 0 1 1307.48,936.81 L1306.32,936.97 L1305.98,935.93 L1307.01,935.38 A3.30,3.30 0 0 1 1307.01,934.82 L1305.98,934.27 L1306.32,933.23 L1307.48,933.39 A3.30,3.30 0 0 1 1307.80,932.94 L1307.29,931.89 L1308.18,931.24 L1309.02,932.06 A3.30,3.30 0 0 1 1309.55,931.89 Z M1311.60,935.10 A1.30,1.30 0 1 0 1309.00,935.10 A1.30,1.30 0 1 0 1311.60,935.10 Z" fill="#4d4d4d" fill-rule="evenodd"/><rect x="73" y="949" width="1343" height="1" fill="#e6e6e6"/><path d="M1318.70,971.46 L1318.90,969.83 L1320.10,969.83 L1320.30,971.46 A5.50,5.50 0 0 1 1320.84,971.57 L1321.65,970.13 L1322.76,970.59 L1322.32,972.18 A5.50,5.50 0 0 1 1322.78,972.49 L1324.08,971.47 L1324.93,972.32 L1323.91,973.62 A5.50,5.50 0 0 1 1324.22,974.08 L1325.81,973.64 L1326.27,974.75 L1324.83,975.56 A5.50,5.50 0 0 1 1324.94,976.10 L1326.57,976.30 L1326.57,977.50 L1324.94,977.70 A5.50,5.50 0 0 1 1324.83,978.24 L1326.27,979.05 L1325.81,980.16 L1324.22,979.72 A5.50,5.50 0 0 1 1323.91,980.18 L1324.93,981.48 L1324.08,982.33 L1322.78,981.31 A5.50,5.50 0 0 1 1322.32,981.62 L1322.76,983.21 L1321.65,983.67 L1320.84,982.23 A5.50,5.50 0 0 1 1320.30,982.34 L1320.10,983.97 L1318.90,983.97 L1318.70,982.34 A5.50,5.50 0 0 1 1318.16,982.23 L1317.35,983.67 L1316.24,983.21 L1316.68,981.62 A5.50,5.50 0 0 1 1316.22,981.31 L1314.92,982.33 L1314.07,981.48 L1315.09,980.18 A5.50,5.50 0 0 1 1314.78,979.72 L1313.19,980.16 L1312.73,979.05 L1314.17,978.24 A5.50,5.50 0 0 1 1314.06,977.70 L1312.43,977.50 L1312.43,976.30 L1314.06,976.10 A5.50,5.50 0 0 1 1314.17,975.56 L1312.73,974.75 L1313.19,973.64 L1314.78,974.08 A5.50,5.50 0 0 1 1315.09,973.62 L1314.07,972.32 L1314.92,971.47 L1316.22,972.49 A5.50,5.50 0 0 1 1316.68,972.18 L1316.24,970.59 L1317.35,970.13 L1318.16,971.57 A5.50,5.50 0 0 1 1318.70,971.46 Z M1322.00,976.90 A2.50,2.50 0 1 0 1317.00,976.90 A2.50,2.50 0 1 0 1322.00,976.90 Z" fill="#4d4d4d" fill-rule="evenodd"/><path d="M1309.55,982.39 L1309.75,981.23 L1310.85,981.23 L1311.05,982.39 A3.30,3.30 0 0 1 1311.58,982.56 L1312.42,981.74 L1313.31,982.39 L1312.80,983.44 A3.30,3.30 0 0 1 1313.12,983.89 L1314.28,983.73 L1314.62,984.77 L1313.59,985.32 A3.30,3.30 0 0 1 1313.59,985.88 L1314.62,986.43 L1314.28,987.47 L1313.12,987.31 A3.30,3.30 0 0 1 1312.80,987.76 L1313.31,988.81 L1312.42,989.46 L1311.58,988.64 A3.30,3.30 0 0 1 1311.05,988.81 L1310.85,989.97 L1309.75,989.97 L1309.55,988.81 A3.30,3.30 0 0 1 1309.02,988.64 L1308.18,989.46 L1307.29,988.81 L1307.80,987.76 A3.30,3.30 0 0 1 1307.48,987.31 L1306.32,987.47 L1305.98,986.43 L1307.01,985.88 A3.30,3.30 0 0 1 1307.01,985.32 L1305.98,984.77 L1306.32,983.73 L1307.48,983.89 A3.30,3.30 0 0 1 1307.80,983.44 L1307.29,982.39 L1308.18,981.74 L1309.02,982.56 A3.30,3.30 0 0 1 1309.55,982.39 Z M1311.60,985.60 A1.30,1.30 0 1 0 1309.00,985.60 A1.30,1.30 0 1 0 1311.60,985.60 Z" fill="#4d4d4d" fill-rule="evenodd"/><rect x="73" y="999" width="1343" height="1" fill="#e6e6e6"/><path d="M1318.70,1021.96 L1318.90,1020.33 L1320.10,1020.33 L1320.30,1021.96 A5.50,5.50 0 0 1 1320.84,1022.07 L1321.65,1020.63 L1322.76,1021.09 L1322.32,1022.68 A5.50,5.50 0 0 1 1322.78,1022.99 L1324.08,1021.97 L1324.93,1022.82 L1323.91,1024.12 A5.50,5.50 0 0 1 1324.22,1024.58 L1325.81,1024.14 L1326.27,1025.25 L1324.83,1026.06 A5.50,5.50 0 0 1 1324.94,1026.60 L1326.57,1026.80 L1326.57,1028.00 L1324.94,1028.20 A5.50,5.50 0 0 1 1324.83,1028.74 L1326.27,1029.55 L1325.81,1030.66 L1324.22,1030.22 A5.50,5.50 0 0 1 1323.91,1030.68 L1324.93,1031.98 L1324.08,1032.83 L1322.78,1031.81 A5.50,5.50 0 0 1 1322.32,1032.12 L1322.76,1033.71 L1321.65,1034.17 L1320.84,1032.73 A5.50,5.50 0 0 1 1320.30,1032.84 L1320.10,1034.47 L1318.90,1034.47 L1318.70,1032.84 A5.50,5.50 0 0 1 1318.16,1032.73 L1317.35,1034.17 L1316.24,1033.71 L1316.68,1032.12 A5.50,5.50 0 0 1 1316.22,1031.81 L1314.92,1032.83 L1314.07,1031.98 L1315.09,1030.68 A5.50,5.50 0 0 1 1314.78,1030.22 L1313.19,1030.66 L1312.73,1029.55 L1314.17,1028.74 A5.50,5.50 0 0 1 1314.06,1028.20 L1312.43,1028.00 L1312.43,1026.80 L1314.06,1026.60 A5.50,5.50 0 0 1 1314.17,1026.06 L1312.73,1025.25 L1313.19,1024.14 L1314.78,1024.58 A5.50,5.50 0 0 1 1315.09,1024.12 L1314.07,1022.82 L1314.92,1021.97 L1316.22,1022.99 A5.50,5.50 0 0 1 1316.68,1022.68 L1316.24,1021.09 L1317.35,1020.63 L1318.16,1022.07 A5.50,5.50 0 0 1 1318.70,1021.96 Z M1322.00,1027.40 A2.50,2.50 0 1 0 1317.00,1027.40 A2.50,2.50 0 1 0 1322.00,1027.40 Z" fill="#4d4d4d" fill-rule="evenodd"/><path d="M1309.55,1032.89 L1309.75,1031.73 L1310.85,1031.73 L1311.05,1032.89 A3.30,3.30 0 0 1 1311.58,1033.06 L1312.42,1032.24 L1313.31,1032.89 L1312.80,1033.94 A3.30,3.30 0 0 1 1313.12,1034.39 L1314.28,1034.23 L1314.62,1035.27 L1313.59,1035.82 A3.30,3.30 0 0 1 1313.59,1036.38 L1314.62,1036.93 L1314.28,1037.97 L1313.12,1037.81 A3.30,3.30 0 0 1 1312.80,1038.26 L1313.31,1039.31 L1312.42,1039.96 L1311.58,1039.14 A3.30,3.30 0 0 1 1311.05,1039.31 L1310.85,1040.47 L1309.75,1040.47 L1309.55,1039.31 A3.30,3.30 0 0 1 1309.02,1039.14 L1308.18,1039.96 L1307.29,1039.31 L1307.80,1038.26 A3.30,3.30 0 0 1 1307.48,1037.81 L1306.32,1037.97 L1305.98,1036.93 L1307.01,1036.38 A3.30,3.30 0 0 1 1307.01,1035.82 L1305.98,1035.27 L1306.32,1034.23 L1307.48,1034.39 A3.30,3.30 0 0 1 1307.80,1033.94 L1307.29,1032.89 L1308.18,1032.24 L1309.02,1033.06 A3.30,3.30 0 0 1 1309.55,1032.89 Z M1311.60,1036.10 A1.30,1.30 0 1 0 1309.00,1036.10 A1.30,1.30 0 1 0 1311.60,1036.10 Z" fill="#4d4d4d" fill-rule="evenodd"/><rect x="73" y="1050" width="1343" height="1" fill="#e6e6e6"/><path d="M1318.70,1072.46 L1318.90,1070.83 L1320.10,1070.83 L1320.30,1072.46 A5.50,5.50 0 0 1 1320.84,1072.57 L1321.65,1071.13 L1322.76,1071.59 L1322.32,1073.18 A5.50,5.50 0 0 1 1322.78,1073.49 L1324.08,1072.47 L1324.93,1073.32 L1323.91,1074.62 A5.50,5.50 0 0 1 1324.22,1075.08 L1325.81,1074.64 L1326.27,1075.75 L1324.83,1076.56 A5.50,5.50 0 0 1 1324.94,1077.10 L1326.57,1077.30 L1326.57,1078.50 L1324.94,1078.70 A5.50,5.50 0 0 1 1324.83,1079.24 L1326.27,1080.05 L1325.81,1081.16 L1324.22,1080.72 A5.50,5.50 0 0 1 1323.91,1081.18 L1324.93,1082.48 L1324.08,1083.33 L1322.78,1082.31 A5.50,5.50 0 0 1 1322.32,1082.62 L1322.76,1084.21 L1321.65,1084.67 L1320.84,1083.23 A5.50,5.50 0 0 1 1320.30,1083.34 L1320.10,1084.97 L1318.90,1084.97 L1318.70,1083.34 A5.50,5.50 0 0 1 1318.16,1083.23 L1317.35,1084.67 L1316.24,1084.21 L1316.68,1082.62 A5.50,5.50 0 0 1 1316.22,1082.31 L1314.92,1083.33 L1314.07,1082.48 L1315.09,1081.18 A5.50,5.50 0 0 1 1314.78,1080.72 L1313.19,1081.16 L1312.73,1080.05 L1314.17,1079.24 A5.50,5.50 0 0 1 1314.06,1078.70 L1312.43,1078.50 L1312.43,1077.30 L1314.06,1077.10 A5.50,5.50 0 0 1 1314.17,1076.56 L1312.73,1075.75 L1313.19,1074.64 L1314.78,1075.08 A5.50,5.50 0 0 1 1315.09,1074.62 L1314.07,1073.32 L1314.92,1072.47 L1316.22,1073.49 A5.50,5.50 0 0 1 1316.68,1073.18 L1316.24,1071.59 L1317.35,1071.13 L1318.16,1072.57 A5.50,5.50 0 0 1 1318.70,1072.46 Z M1322.00,1077.90 A2.50,2.50 0 1 0 1317.00,1077.90 A2.50,2.50 0 1 0 1322.00,1077.90 Z" fill="#4d4d4d" fill-rule="evenodd"/><path d="M1309.55,1083.39 L1309.75,1082.23 L1310.85,1082.23 L1311.05,1083.39 A3.30,3.30 0 0 1 1311.58,1083.56 L1312.42,1082.74 L1313.31,1083.39 L1312.80,1084.44 A3.30,3.30 0 0 1 1313.12,1084.89 L1314.28,1084.73 L1314.62,1085.77 L1313.59,1086.32 A3.30,3.30 0 0 1 1313.59,1086.88 L1314.62,1087.43 L1314.28,1088.47 L1313.12,1088.31 A3.30,3.30 0 0 1 1312.80,1088.76 L1313.31,1089.81 L1312.42,1090.46 L1311.58,1089.64 A3.30,3.30 0 0 1 1311.05,1089.81 L1310.85,1090.97 L1309.75,1090.97 L1309.55,1089.81 A3.30,3.30 0 0 1 1309.02,1089.64 L1308.18,1090.46 L1307.29,1089.81 L1307.80,1088.76 A3.30,3.30 0 0 1 1307.48,1088.31 L1306.32,1088.47 L1305.98,1087.43 L1307.01,1086.88 A3.30,3.30 0 0 1 1307.01,1086.32 L1305.98,1085.77 L1306.32,1084.73 L1307.48,1084.89 A3.30,3.30 0 0 1 1307.80,1084.44 L1307.29,1083.39 L1308.18,1082.74 L1309.02,1083.56 A3.30,3.30 0 0 1 1309.55,1083.39 Z M1311.60,1086.60 A1.30,1.30 0 1 0 1309.00,1086.60 A1.30,1.30 0 1 0 1311.60,1086.60 Z" fill="#4d4d4d" fill-rule="evenodd"/><rect x="73" y="1100" width="1343" height="1" fill="#e6e6e6"/><path d="M1318.70,1122.96 L1318.90,1121.33 L1320.10,1121.33 L1320.30,1122.96 A5.50,5.50 0 0 1 1320.84,1123.07 L1321.65,1121.63 L1322.76,1122.09 L1322.32,1123.68 A5.50,5.50 0 0 1 1322.78,1123.99 L1324.08,1122.97 L1324.93,1123.82 L1323.91,1125.12 A5.50,5.50 0 0 1 1324.22,1125.58 L1325.81,1125.14 L1326.27,1126.25 L1324.83,1127.06 A5.50,5.50 0 0 1 1324.94,1127.60 L1326.57,1127.80 L1326.57,1129.00 L1324.94,1129.20 A5.50,5.50 0 0 1 1324.83,1129.74 L1326.27,1130.55 L1325.81,1131.66 L1324.22,1131.22 A5.50,5.50 0 0 1 1323.91,1131.68 L1324.93,1132.98 L1324.08,1133.83 L1322.78,1132.81 A5.50,5.50 0 0 1 1322.32,1133.12 L1322.76,1134.71 L1321.65,1135.17 L1320.84,1133.73 A5.50,5.50 0 0 1 1320.30,1133.84 L1320.10,1135.47 L1318.90,1135.47 L1318.70,1133.84 A5.50,5.50 0 0 1 1318.16,1133.73 L1317.35,1135.17 L1316.24,1134.71 L1316.68,1133.12 A5.50,5.50 0 0 1 1316.22,1132.81 L1314.92,1133.83 L1314.07,1132.98 L1315.09,1131.68 A5.50,5.50 0 0 1 1314.78,1131.22 L1313.19,1131.66 L1312.73,1130.55 L1314.17,1129.74 A5.50,5.50 0 0 1 1314.06,1129.20 L1312.43,1129.00 L1312.43,1127.80 L1314.06,1127.60 A5.50,5.50 0 0 1 1314.17,1127.06 L1312.73,1126.25 L1313.19,1125.14 L1314.78,1125.58 A5.50,5.50 0 0 1 1315.09,1125.12 L1314.07,1123.82 L1314.92,1122.97 L1316.22,1123.99 A5.50,5.50 0 0 1 1316.68,1123.68 L1316.24,1122.09 L1317.35,1121.63 L1318.16,1123.07 A5.50,5.50 0 0 1 1318.70,1122.96 Z M1322.00,1128.40 A2.50,2.50 0 1 0 1317.00,1128.40 A2.50,2.50 0 1 0 1322.00,1128.40 Z" fill="#4d4d4d" fill-rule="evenodd"/><path d="M1309.55,1133.89 L1309.75,1132.73 L1310.85,1132.73 L1311.05,1133.89 A3.30,3.30 0 0 1 1311.58,1134.06 L1312.42,1133.24 L1313.31,1133.89 L1312.80,1134.94 A3.30,3.30 0 0 1 1313.12,1135.39 L1314.28,1135.23 L1314.62,1136.27 L1313.59,1136.82 A3.30,3.30 0 0 1 1313.59,1137.38 L1314.62,1137.93 L1314.28,1138.97 L1313.12,1138.81 A3.30,3.30 0 0 1 1312.80,1139.26 L1313.31,1140.31 L1312.42,1140.96 L1311.58,1140.14 A3.30,3.30 0 0 1 1311.05,1140.31 L1310.85,1141.47 L1309.75,1141.47 L1309.55,1140.31 A3.30,3.30 0 0 1 1309.02,1140.14 L1308.18,1140.96 L1307.29,1140.31 L1307.80,1139.26 A3.30,3.30 0 0 1 1307.48,1138.81 L1306.32,1138.97 L1305.98,1137.93 L1307.01,1137.38 A3.30,3.30 0 0 1 1307.01,1136.82 L1305.98,1136.27 L1306.32,1135.23 L1307.48,1135.39 A3.30,3.30 0 0 1 1307.80,1134.94 L1307.29,1133.89 L1308.18,1133.24 L1309.02,1134.06 A3.30,3.30 0 0 1 1309.55,1133.89 Z M1311.60,1137.10 A1.30,1.30 0 1 0 1309.00,1137.10 A1.30,1.30 0 1 0 1311.60,1137.10 Z" fill="#4d4d4d" fill-rule="evenodd"/><rect x="73" y="1151" width="1343" height="1" fill="#e6e6e6"/><path d="M1318.70,1173.46 L1318.90,1171.83 L1320.10,1171.83 L1320.30,1173.46 A5.50,5.50 0 0 1 1320.84,1173.57 L1321.65,1172.13 L1322.76,1172.59 L1322.32,1174.18 A5.50,5.50 0 0 1 1322.78,1174.49 L1324.08,1173.47 L1324.93,1174.32 L1323.91,1175.62 A5.50,5.50 0 0 1 1324.22,1176.08 L1325.81,1175.64 L1326.27,1176.75 L1324.83,1177.56 A5.50,5.50 0 0 1 1324.94,1178.10 L1326.57,1178.30 L1326.57,1179.50 L1324.94,1179.70 A5.50,5.50 0 0 1 1324.83,1180.24 L1326.27,1181.05 L1325.81,1182.16 L1324.22,1181.72 A5.50,5.50 0 0 1 1323.91,1182.18 L1324.93,1183.48 L1324.08,1184.33 L1322.78,1183.31 A5.50,5.50 0 0 1 1322.32,1183.62 L1322.76,1185.21 L1321.65,1185.67 L1320.84,1184.23 A5.50,5.50 0 0 1 1320.30,1184.34 L1320.10,1185.97 L1318.90,1185.97 L1318.70,1184.34 A5.50,5.50 0 0 1 1318.16,1184.23 L1317.35,1185.67 L1316.24,1185.21 L1316.68,1183.62 A5.50,5.50 0 0 1 1316.22,1183.31 L1314.92,1184.33 L1314.07,1183.48 L1315.09,1182.18 A5.50,5.50 0 0 1 1314.78,1181.72 L1313.19,1182.16 L1312.73,1181.05 L1314.17,1180.24 A5.50,5.50 0 0 1 1314.06,1179.70 L1312.43,1179.50 L1312.43,1178.30 L1314.06,1178.10 A5.50,5.50 0 0 1 1314.17,1177.56 L1312.73,1176.75 L1313.19,1175.64 L1314.78,1176.08 A5.50,5.50 0 0 1 1315.09,1175.62 L1314.07,1174.32 L1314.92,1173.47 L1316.22,1174.49 A5.50,5.50 0 0 1 1316.68,1174.18 L1316.24,1172.59 L1317.35,1172.13 L1318.16,1173.57 A5.50,5.50 0 0 1 1318.70,1173.46 Z M1322.00,1178.90 A2.50,2.50 0 1 0 1317.00,1178.90 A2.50,2.50 0 1 0 1322.00,1178.90 Z" fill="#4d4d4d" fill-rule="evenodd"/><path d="M1309.55,1184.39 L1309.75,1183.23 L1310.85,1183.23 L1311.05,1184.39 A3.30,3.30 0 0 1 1311.58,1184.56 L1312.42,1183.74 L1313.31,1184.39 L1312.80,1185.44 A3.30,3.30 0 0 1 1313.12,1185.89 L1314.28,1185.73 L1314.62,1186.77 L1313.59,1187.32 A3.30,3.30 0 0 1 1313.59,1187.88 L1314.62,1188.43 L1314.28,1189.47 L1313.12,1189.31 A3.30,3.30 0 0 1 1312.80,1189.76 L1313.31,1190.81 L1312.42,1191.46 L1311.58,1190.64 A3.30,3.30 0 0 1 1311.05,1190.81 L1310.85,1191.97 L1309.75,1191.97 L1309.55,1190.81 A3.30,3.30 0 0 1 1309.02,1190.64 L1308.18,1191.46 L1307.29,1190.81 L1307.80,1189.76 A3.30,3.30 0 0 1 1307.48,1189.31 L1306.32,1189.47 L1305.98,1188.43 L1307.01,1187.88 A3.30,3.30 0 0 1 1307.01,1187.32 L1305.98,1186.77 L1306.32,1185.73 L1307.48,1185.89 A3.30,3.30 0 0 1 1307.80,1185.44 L1307.29,1184.39 L1308.18,1183.74 L1309.02,1184.56 A3.30,3.30 0 0 1 1309.55,1184.39 Z M1311.60,1187.60 A1.30,1.30 0 1 0 1309.00,1187.60 A1.30,1.30 0 1 0 1311.60,1187.60 Z" fill="#4d4d4d" fill-rule="evenodd"/><rect x="73" y="1201" width="1343" height="1" fill="#e6e6e6"/><path d="M1318.70,1223.96 L1318.90,1222.33 L1320.10,1222.33 L1320.30,1223.96 A5.50,5.50 0 0 1 1320.84,1224.07 L1321.65,1222.63 L1322.76,1223.09 L1322.32,1224.68 A5.50,5.50 0 0 1 1322.78,1224.99 L1324.08,1223.97 L1324.93,1224.82 L1323.91,1226.12 A5.50,5.50 0 0 1 1324.22,1226.58 L1325.81,1226.14 L1326.27,1227.25 L1324.83,1228.06 A5.50,5.50 0 0 1 1324.94,1228.60 L1326.57,1228.80 L1326.57,1230.00 L1324.94,1230.20 A5.50,5.50 0 0 1 1324.83,1230.74 L1326.27,1231.55 L1325.81,1232.66 L1324.22,1232.22 A5.50,5.50 0 0 1 1323.91,1232.68 L1324.93,1233.98 L1324.08,1234.83 L1322.78,1233.81 A5.50,5.50 0 0 1 1322.32,1234.12 L1322.76,1235.71 L1321.65,1236.17 L1320.84,1234.73 A5.50,5.50 0 0 1 1320.30,1234.84 L1320.10,1236.47 L1318.90,1236.47 L1318.70,1234.84 A5.50,5.50 0 0 1 1318.16,1234.73 L1317.35,1236.17 L1316.24,1235.71 L1316.68,1234.12 A5.50,5.50 0 0 1 1316.22,1233.81 L1314.92,1234.83 L1314.07,1233.98 L1315.09,1232.68 A5.50,5.50 0 0 1 1314.78,1232.22 L1313.19,1232.66 L1312.73,1231.55 L1314.17,1230.74 A5.50,5.50 0 0 1 1314.06,1230.20 L1312.43,1230.00 L1312.43,1228.80 L1314.06,1228.60 A5.50,5.50 0 0 1 1314.17,1228.06 L1312.73,1227.25 L1313.19,1226.14 L1314.78,1226.58 A5.50,5.50 0 0 1 1315.09,1226.12 L1314.07,1224.82 L1314.92,1223.97 L1316.22,1224.99 A5.50,5.50 0 0 1 1316.68,1224.68 L1316.24,1223.09 L1317.35,1222.63 L1318.16,1224.07 A5.50,5.50 0 0 1 1318.70,1223.96 Z M1322.00,1229.40 A2.50,2.50 0 1 0 1317.00,1229.40 A2.50,2.50 0 1 0 1322.00,1229.40 Z" fill="#4d4d4d" fill-rule="evenodd"/><path d="M1309.55,1234.89 L1309.75,1233.73 L1310.85,1233.73 L1311.05,1234.89 A3.30,3.30 0 0 1 1311.58,1235.06 L1312.42,1234.24 L1313.31,1234.89 L1312.80,1235.94 A3.30,3.30 0 0 1 1313.12,1236.39 L1314.28,1236.23 L1314.62,1237.27 L1313.59,1237.82 A3.30,3.30 0 0 1 1313.59,1238.38 L1314.62,1238.93 L1314.28,1239.97 L1313.12,1239.81 A3.30,3.30 0 0 1 1312.80,1240.26 L1313.31,1241.31 L1312.42,1241.96 L1311.58,1241.14 A3.30,3.30 0 0 1 1311.05,1241.31 L1310.85,1242.47 L1309.75,1242.47 L1309.55,1241.31 A3.30,3.30 0 0 1 1309.02,1241.14 L1308.18,1241.96 L1307.29,1241.31 L1307.80,1240.26 A3.30,3.30 0 0 1 1307.48,1239.81 L1306.32,1239.97 L1305.98,1238.93 L1307.01,1238.38 A3.30,3.30 0 0 1 1307.01,1237.82 L1305.98,1237.27 L1306.32,1236.23 L1307.48,1236.39 A3.30,3.30 0 0 1 1307.80,1235.94 L1307.29,1234.89 L1308.18,1234.24 L1309.02,1235.06 A3.30,3.30 0 0 1 1309.55,1234.89 Z M1311.60,1238.10 A1.30,1.30 0 1 0 1309.00,1238.10 A1.30,1.30 0 1 0 1311.60,1238.10 Z" fill="#4d4d4d" fill-rule="evenodd"/><rect x="73" y="1252" width="1343" height="1" fill="#e6e6e6"/></svg></body></html>
